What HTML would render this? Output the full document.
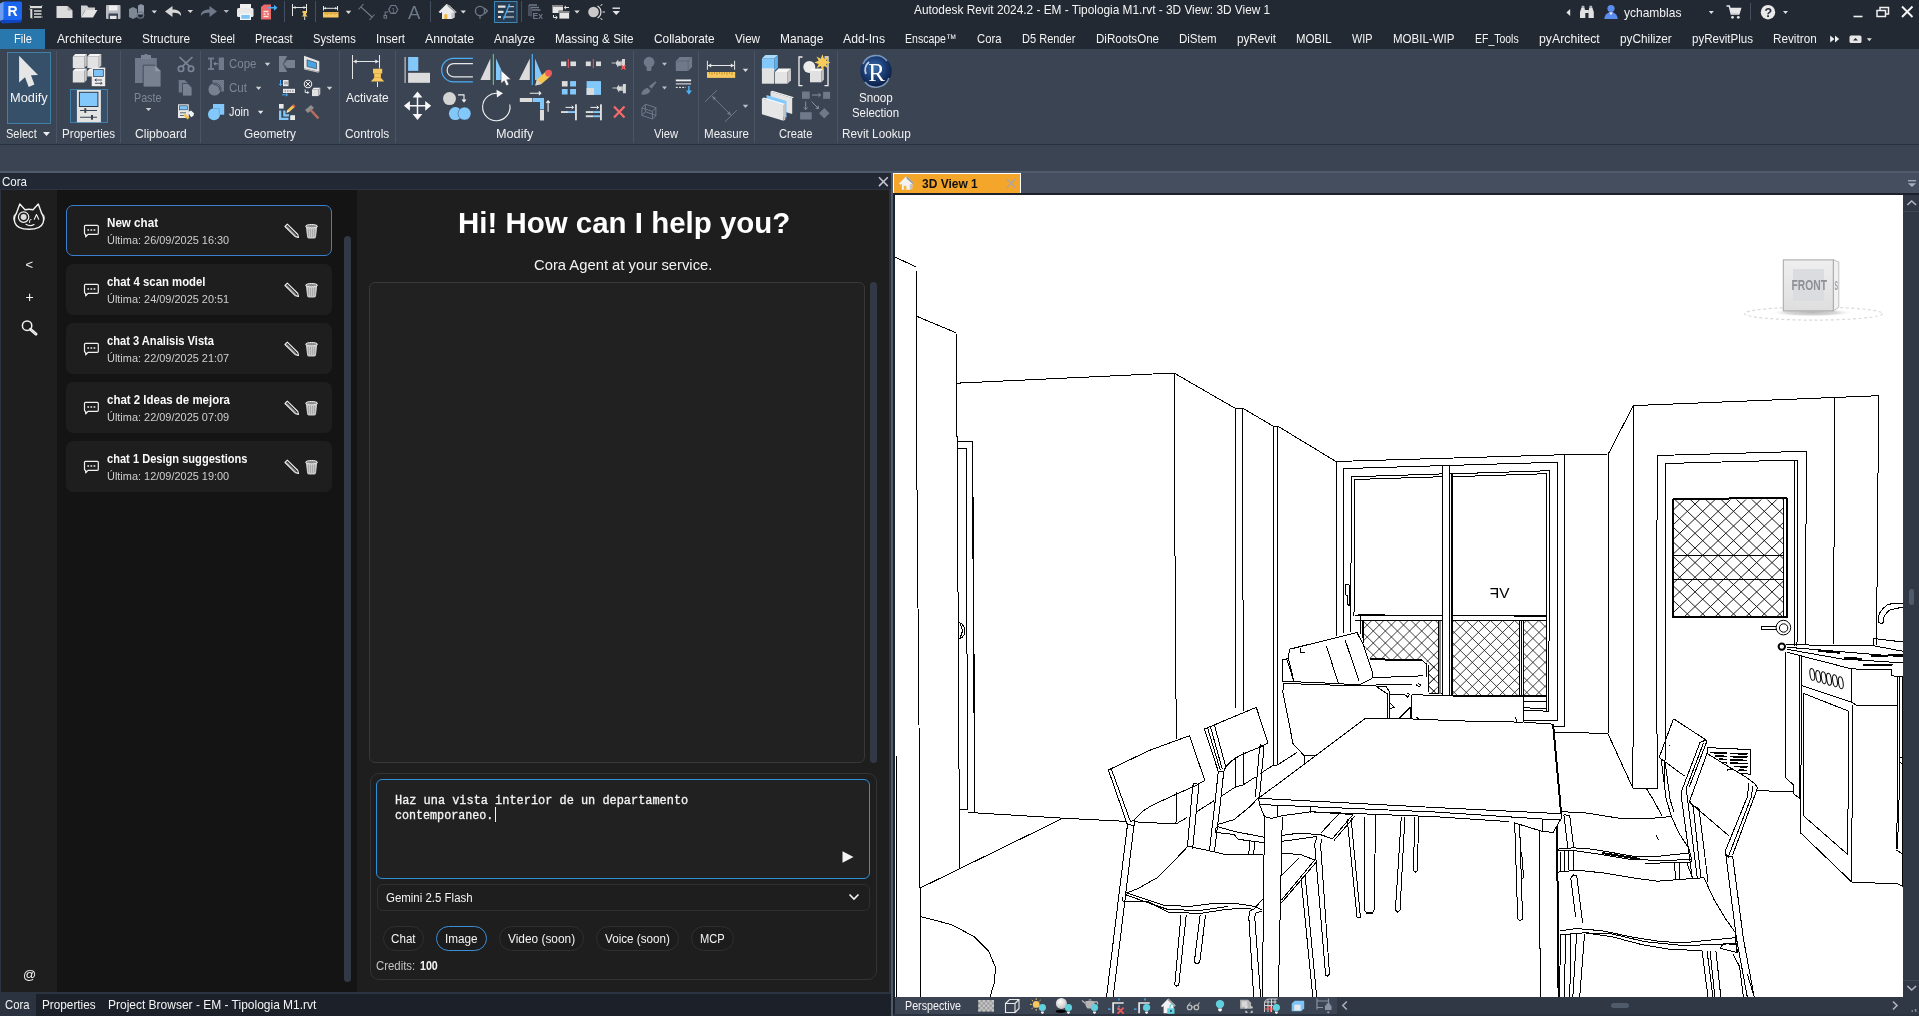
<!DOCTYPE html>
<html lang="en">
<head>
<meta charset="utf-8">
<title>Autodesk Revit 2024.2 - EM - Tipologia M1.rvt - 3D View: 3D View 1</title>
<style>
*{box-sizing:border-box;margin:0;padding:0}
html,body{width:1919px;height:1016px;overflow:hidden;background:#3b4453}
body{position:relative;font-family:"Liberation Sans",sans-serif;font-size:12px;color:#f2f2f2;-webkit-font-smoothing:antialiased}
.a{position:absolute}
.t{position:absolute;white-space:nowrap;line-height:1;transform-origin:0 50%}
svg{position:absolute;overflow:visible}
/* frame */
#titlebar{left:0;top:0;width:1919px;height:49px;background:#222933}
#ribbon{left:0;top:49px;width:1919px;height:95px;background:#3b4453}
#ribline{left:0;top:144px;width:1919px;height:1px;background:#2a313d}
#optbar{left:0;top:145px;width:1919px;height:26px;background:#3b4453}
#optline{left:0;top:171px;width:1919px;height:2px;background:#4f5b6b}
#filetab{left:0;top:29px;width:45px;height:20px;background:#2878ad}
.tab{top:33px;font-size:12.2px;color:#f4f4f4}
.pl{top:128px;font-size:12.2px;color:#f0f0f0}
.sep{position:absolute;top:51px;width:1px;height:92px;background:#4a5464}
</style>
</head>
<body>
<div id="root" style="position:absolute;left:0;top:0;width:1919px;height:1016px;will-change:transform">
<div class="a" id="titlebar"></div>
<div class="a" id="ribbon"></div>
<div class="a" id="ribline"></div>
<div class="a" id="optbar"></div>
<div class="a" id="optline"></div>
<div class="a" id="filetab"></div>
<!-- title -->
<span class="t" id="title" style="left:914.3px;top:4px;font-size:12.6px;color:#f4f4f4;transform:scaleX(0.9400)">Autodesk Revit 2024.2 - EM - Tipologia M1.rvt - 3D View: 3D View 1</span>
<span class="t" id="user" style="left:1624px;top:7px;font-size:12.6px;color:#f4f4f4;transform:scaleX(0.9534)">ychamblas</span>
<!-- tabs -->
<span class="t tab" style="left:14px;transform:scaleX(0.9165)">File</span>
<span class="t tab" style="left:57px;transform:scaleX(0.9995)">Architecture</span>
<span class="t tab" style="left:142px;transform:scaleX(0.9706)">Structure</span>
<span class="t tab" style="left:210px;transform:scaleX(0.8999)">Steel</span>
<span class="t tab" style="left:255px;transform:scaleX(0.9122)">Precast</span>
<span class="t tab" style="left:313px;transform:scaleX(0.9137)">Systems</span>
<span class="t tab" style="left:376px;transform:scaleX(0.9513)">Insert</span>
<span class="t tab" style="left:425px;transform:scaleX(1.0042)">Annotate</span>
<span class="t tab" style="left:494px;transform:scaleX(0.9456)">Analyze</span>
<span class="t tab" style="left:555px;transform:scaleX(0.9656)">Massing &amp; Site</span>
<span class="t tab" style="left:654.3px;transform:scaleX(0.9736)">Collaborate</span>
<span class="t tab" style="left:735px;transform:scaleX(0.9541)">View</span>
<span class="t tab" style="left:780px;transform:scaleX(0.9830)">Manage</span>
<span class="t tab" style="left:843px;transform:scaleX(0.9996)">Add-Ins</span>
<span class="t tab" style="left:905px;transform:scaleX(0.8637)">Enscape™</span>
<span class="t tab" style="left:977.3px;transform:scaleX(0.9235)">Cora</span>
<span class="t tab" style="left:1022.3px;transform:scaleX(0.9058)">D5 Render</span>
<span class="t tab" style="left:1096px;transform:scaleX(0.9489)">DiRootsOne</span>
<span class="t tab" style="left:1179px;transform:scaleX(0.9432)">DiStem</span>
<span class="t tab" style="left:1237px;transform:scaleX(0.9596)">pyRevit</span>
<span class="t tab" style="left:1296px;transform:scaleX(0.9357)">MOBIL</span>
<span class="t tab" style="left:1352px;transform:scaleX(0.8901)">WIP</span>
<span class="t tab" style="left:1393.2px;transform:scaleX(0.9459)">MOBIL-WIP</span>
<span class="t tab" style="left:1475.3px;transform:scaleX(0.8600)">EF_Tools</span>
<span class="t tab" style="left:1539.2px;transform:scaleX(1.0083)">pyArchitect</span>
<span class="t tab" style="left:1620.2px;transform:scaleX(0.9679)">pyChilizer</span>
<span class="t tab" style="left:1692px;transform:scaleX(0.9478)">pyRevitPlus</span>
<span class="t tab" style="left:1773px;transform:scaleX(0.9628)">Revitron</span>
<!-- panel separators -->
<div class="sep" style="left:56px"></div>
<div class="sep" style="left:120px"></div>
<div class="sep" style="left:200px"></div>
<div class="sep" style="left:339px"></div>
<div class="sep" style="left:395px"></div>
<div class="sep" style="left:633px"></div>
<div class="sep" style="left:698px"></div>
<div class="sep" style="left:754px"></div>
<div class="sep" style="left:837px"></div>
<!-- panel labels -->
<span class="t pl" style="left:6px;transform:scaleX(0.9063)">Select</span>
<span class="t pl" style="left:62px;transform:scaleX(0.9541)">Properties</span>
<span class="t pl" style="left:135px;transform:scaleX(0.9910)">Clipboard</span>
<span class="t pl" style="left:244px;transform:scaleX(0.9717)">Geometry</span>
<span class="t pl" style="left:345px;transform:scaleX(0.9760)">Controls</span>
<span class="t pl" style="left:496px;transform:scaleX(1.0388)">Modify</span>
<span class="t pl" style="left:654.3px;transform:scaleX(0.9159)">View</span>
<span class="t pl" style="left:704px;transform:scaleX(0.9489)">Measure</span>
<span class="t pl" style="left:779.3px;transform:scaleX(0.9127)">Create</span>
<span class="t pl" style="left:842px;transform:scaleX(0.9657)">Revit Lookup</span>
<!-- buttons -->
<div class="a" style="left:7px;top:52px;width:44px;height:72px;background:#37506a;border:1px solid #3f7fa8"></div>
<span class="t" style="left:10px;top:92px;font-size:12.2px;color:#f4f4f4;transform:scaleX(1.0500)">Modify</span>
<div class="a" style="left:70px;top:89px;width:38px;height:34px;background:#37506a;border:1px solid #3f7fa8"></div>
<span class="t" style="left:134.3px;top:92px;font-size:12.2px;color:#7d8796;transform:scaleX(0.8790)">Paste</span>
<span class="t" style="left:229.3px;top:58px;font-size:12.2px;color:#7d8796;transform:scaleX(0.9403)">Cope</span>
<span class="t" style="left:229.3px;top:82px;font-size:12.2px;color:#7d8796;transform:scaleX(0.9489)">Cut</span>
<span class="t" style="left:229.3px;top:106px;font-size:12.2px;color:#f4f4f4;transform:scaleX(0.8945)">Join</span>
<span class="t" style="left:346px;top:92px;font-size:12.2px;color:#f4f4f4;transform:scaleX(0.9848)">Activate</span>
<span class="t" style="left:859px;top:92px;font-size:12.2px;color:#f4f4f4;transform:scaleX(0.9560)">Snoop</span>
<span class="t" style="left:852.3px;top:107px;font-size:12.2px;color:#f4f4f4;transform:scaleX(0.9374)">Selection</span>
<svg style="left:0;top:0" width="1919" height="172" viewBox="0 0 1919 172">
<path d="M0 3.5 L4 1.5 L4 19.5 L0 21 Z" fill="#6b9cf0"/><path d="M0 21 L4 19.5 L22 19.5 L21 22.5 L2 23.5 Z" fill="#0e46c4"/><rect x="3.5" y="1.5" width="18.5" height="18.5" rx="1.5" fill="#1a66f0"/>
<text x="7.6" y="16.2" font-family="Liberation Sans,sans-serif" font-weight="bold" font-size="14" fill="#fff">R</text>
<path d="M29.5 5.5 h13 v13 h-13 z" fill="none" stroke="#8a93a3" stroke-width="1" stroke-dasharray="1 11"/><rect x="30" y="6" width="12" height="2.2" fill="#dcdcdc"/><rect x="30.3" y="9" width="2" height="9" fill="#dcdcdc"/><path d="M34 11 h7.5 M34 14 h7.5 M34 17 h7.5" stroke="#dcdcdc" stroke-width="1.6"/>
<path d="M56.5 6 h11 l5 4.5 v7.5 h-16 z" fill="#dcdcdc"/><path d="M67.5 6 l5 4.5 h-5 z" fill="#a9a9a9"/>
<path d="M81 17.5 v-12 h6 l1.5 2 h6.5 v3 h-10 z" fill="#cfcfcf"/><path d="M81 17.5 l4.5 -7.5 h12 l-4.5 7.5 z" fill="#e4e4e4"/>
<rect x="106" y="5" width="14.5" height="14" rx="1" fill="#b9bcc2"/><rect x="109" y="5.5" width="8.5" height="5" fill="#f0f0f0"/><rect x="108.5" y="13.5" width="9.5" height="5.5" fill="#3a4352"/><rect x="110" y="15.8" width="6.5" height="3.2" fill="#e6e6e6"/>
<path d="M129 9 l4 -2 l4 2 v8 l-4 2 l-4 -2 z" fill="#7d8796"/><path d="M138 5.5 l3 -1.5 l3 1.5 v9 h-6 z" fill="#8a94a3"/><circle cx="140.5" cy="15" r="3.2" fill="none" stroke="#6c7686" stroke-width="1.3"/>
<path d="M151.55 10.4 h5.5 l-2.75 3.2 z" fill="#d8d8d8"/>
<path d="M165 11.5 l7.5 -5.5 v3.5 c6 0 9 2.5 8.5 6.5 c-1.5 -2.5 -4 -3.5 -8.5 -3.3 v4.3 z" fill="#d6d6d6"/>
<path d="M187.55 9.9 h5.5 l-2.75 3.2 z" fill="#d8d8d8"/>
<path d="M217 11.5 l-7.5 -5.5 v3.5 c-6 0 -9 2.5 -8.5 6.5 c1.5 -2.5 4 -3.5 8.5 -3.3 v4.3 z" fill="#6f7989"/>
<path d="M223.55 9.9 h5.5 l-2.75 3.2 z" fill="#aeb4bf"/>
<rect x="240" y="4" width="11" height="5" fill="#f0f0f0"/><rect x="237" y="8" width="16.5" height="9" rx="1.5" fill="#e9e9e9"/><rect x="240" y="13.5" width="11" height="6.5" fill="#f5f5f5"/><rect x="241.3" y="15" width="8.4" height="3.8" fill="#7cc4f8"/>
<path d="M261 7 l3 -2.5 h7 v15 h-10 z" fill="#ec6a6a"/><path d="M263.5 11.5 h5 M263.5 14 h2 M267 14 h2 M263.5 16.5 h5" stroke="#fbe3e3" stroke-width="1.4"/><path d="M268 7 h6 v-2.3 l3.5 3 l-3.5 3 v-2.2 h-6 z" fill="#49aef5"/>
<path d="M284.5 1 v21 M315.5 1 v21 M430.5 1 v21 M521.5 1 v21" stroke="#465063" stroke-width="1"/>
<path d="M292.5 4 v12 M306.5 4 v9" stroke="#e6e6e6" stroke-width="1"/><path d="M293 7.5 h13" stroke="#e6e6e6" stroke-width="1"/><path d="M293 7.5 l2.5 -1.5 v3 z M306 7.5 l-2.500 -1.500 v3 z" fill="#e6e6e6"/><path d="M302.5 11 h4.500 v2 h-0.800 v2 l1.500 1.500 h-6 l1.500 -1.500 v-2 h-0.700 z" fill="#f7c860"/><path d="M304.7 16.500 v3.500" stroke="#e6e6e6" stroke-width="1"/>
<path d="M323.5 6 v4.500 M337.500 6 v4.500 M323.500 8.300 h14" stroke="#e6e6e6" stroke-width="1"/><path d="M324 8.300 l2 -1.300 v2.600 z M337 8.300 l-2 -1.300 v2.600 z" fill="#e6e6e6"/><rect x="323" y="12" width="15.500" height="5.500" fill="#f7c860"/><path d="M325 12 v2 M327 12 v2.800 M329 12 v2 M331 12 v2.800 M333 12 v2 M335 12 v2.800 M337 12 v2" stroke="#b98a1e" stroke-width="0.800"/>
<path d="M345.75 10.7 h5.5 l-2.75 3.2 z" fill="#d8d8d8"/>
<path d="M360.500 6.500 l12 11 M358.500 9.500 l5 -5.500 M369.500 20 l5 -5.500" stroke="#6f7989" stroke-width="1.100" fill="none"/>
<path d="M391 5.500 l4.500 0 l2.300 4 l-2.300 4 l-4.500 0 l-2.300 -4 z" fill="none" stroke="#6f7989" stroke-width="1.200"/><path d="M388.500 12 l-3.300 0 v3.500" fill="none" stroke="#6f7989" stroke-width="1.100"/><rect x="384" y="15.500" width="2.600" height="2.600" fill="none" stroke="#6f7989" stroke-width="1"/><text x="391.300" y="12.600" font-family="Liberation Sans,sans-serif" font-size="7" fill="#6f7989">1</text>
<text x="408" y="18.700" font-family="Liberation Sans,sans-serif" font-size="18.500" fill="#6f7989">A</text>
<path d="M438.500 12 l8 -8 l3 1.500 l7 6.500 l-1 1 l-1 -0.800 v5.300 l-3 1.500 h-9.500 v-7 l-1.500 1.300 z" fill="#ececec"/><path d="M446.500 4 l3 1.500 l7 6.500 l-1 1 l-7.500 -6.500 z" fill="#9a9a9a"/><path d="M451.500 13 l3 -1 v5.500 l-3 1.500 z" fill="#c4c4c4"/><rect x="444.300" y="14.200" width="3" height="4.800" fill="#f0b73a"/>
<path d="M460.55 10.4 h5.5 l-2.75 3.2 z" fill="#d8d8d8"/>
<circle cx="480" cy="11" r="4.600" fill="none" stroke="#6f7989" stroke-width="1.300"/><path d="M484.500 8 l3 3 l-3 3" fill="none" stroke="#6f7989" stroke-width="1.200"/><path d="M480 15.500 v3.500" stroke="#6f7989" stroke-width="1.200"/>
<rect x="494.500" y="1.500" width="22.500" height="21" fill="#263c52" stroke="#3f86b5" stroke-width="1"/><path d="M498 6.700 h7.500 M498 11.800 h5.500 M498 17 h3" stroke="#e0e0e0" stroke-width="2.200"/><path d="M508 6.700 h6 M506 11.800 h8 M503.500 17 h10.500" stroke="#e0e0e0" stroke-width="1"/><path d="M509.500 4 l-6 15.500" stroke="#49aef5" stroke-width="1.300"/>
<path d="M529 5 h8 M530.500 7.500 h8.500 M532 10 h8.500" stroke="#6f7989" stroke-width="1.300"/><path d="M529 5 v11 M531 7.500 v9" stroke="#6f7989" stroke-width="1"/><text x="532.500" y="18.800" font-family="Liberation Sans,sans-serif" font-weight="bold" font-size="8.500" fill="#6f7989">Ex</text>
<rect x="552.500" y="5" width="10.500" height="8" fill="#e6e6e6"/><rect x="552.500" y="5" width="10.500" height="2" fill="#8a8a8a"/><rect x="559" y="11" width="10.500" height="8" fill="#e6e6e6" stroke="#222933" stroke-width="0.800"/><rect x="559" y="11" width="10.500" height="2" fill="#8a8a8a"/><path d="M565 7.500 h4 v-0 M553.500 15 v2.500 h3.500" fill="none" stroke="#e6e6e6" stroke-width="1"/><path d="M566 5.800 l-1.800 1.700 l1.800 1.700 M555.500 15.800 l1.800 1.700 l-1.800 1.700" fill="none" stroke="#e6e6e6" stroke-width="1"/>
<path d="M574.25 10.4 h5.5 l-2.75 3.2 z" fill="#d8d8d8"/>
<circle cx="593.500" cy="12" r="5.300" fill="#c9c9c9"/><path d="M597.500 6 a7 7 0 0 1 0 12" fill="none" stroke="#e6e6e6" stroke-width="1.200"/><path d="M600.500 6 l1.800 -2 M602.500 12 h2.500 M600.500 18 l1.800 2" stroke="#e6e6e6" stroke-width="1"/>
<path d="M612.500 8.200 h7.500" stroke="#e6e6e6" stroke-width="1.400"/><path d="M612.500 11 h7.500 l-3.750 4 z" fill="#e6e6e6"/>
<path d="M1570.200 9 v7 l-3.800 -3.500 z" fill="#e6e6e6"/>
<path d="M1580 18 v-6 l1.500 -4.500 h3 l0.800 4.500 v6 z M1588.500 18 v-6 l0.800 -4.500 h3 l1.500 4.500 v6 z" fill="#e2e2e2"/><rect x="1585" y="10" width="3.800" height="3" fill="#e2e2e2"/><rect x="1581.700" y="5.800" width="2.600" height="2" fill="#bdbdbd"/><rect x="1589.500" y="5.800" width="2.600" height="2" fill="#bdbdbd"/>
<circle cx="1611" cy="8.500" r="3.600" fill="#5b8def"/><path d="M1604.300 19 c0.500 -5 3 -6.500 6.700 -6.500 s6.200 1.500 6.700 6.500 z" fill="#5b8def"/><path d="M1609 12.300 l2 3 l2 -3 z" fill="#dfe8fb"/>
<path d="M1708.8 11.1 h5 l-2.5 3 z" fill="#e0e0e0"/>
<path d="M1726.500 6 h2.800 l2 8 h7.500 l1.700 -5.500 h-10.500" fill="none" stroke="#e6e6e6" stroke-width="1.500"/><path d="M1730.300 8.500 h10 l-1.500 5 h-7.300 z" fill="#e6e6e6"/><circle cx="1732.500" cy="17.300" r="1.400" fill="#e6e6e6"/><circle cx="1738.300" cy="17.300" r="1.400" fill="#e6e6e6"/>
<path d="M1750.500 3 v17" stroke="#465063" stroke-width="1"/>
<circle cx="1768" cy="12.200" r="7.200" fill="#e9e9e9"/><text x="1764.600" y="16.600" font-family="Liberation Sans,sans-serif" font-weight="bold" font-size="12.500" fill="#222933">?</text>
<path d="M1783 11.1 h5 l-2.5 3 z" fill="#e0e0e0"/>
<path d="M1853.500 16.500 h9" stroke="#f0f0f0" stroke-width="1.600"/>
<rect x="1877" y="10.500" width="8.500" height="6" fill="none" stroke="#f0f0f0" stroke-width="1.500"/><path d="M1880 10 v-2.500 h8.500 v6.500 h-2.500" fill="none" stroke="#f0f0f0" stroke-width="1.500"/>
<path d="M1902 6.500 l10.500 10.500 M1912.500 6.500 l-10.500 10.500" stroke="#f4f4f4" stroke-width="1.900"/>
<path d="M1830.200 35.500 l4.200 3.500 l-4.200 3.500 z M1835 35.500 l4.200 3.500 l-4.200 3.500 z" fill="#f0f0f0"/>
<rect x="1849.500" y="35.500" width="12" height="7.500" rx="1.500" fill="#e6e6e6"/><path d="M1853 40.500 l2.500 -2.500 l2.500 2.500 z" fill="#222933"/>
<path d="M1866.8 38.3 h5 l-2.5 3 z" fill="#e0e0e0"/>
<path d="M19.100 55.800 L19.100 82.400 L25 77.200 L28.700 87 L34.400 84.500 L31 75.300 L38 74.900 Z" fill="#e6e6e6"/>
<path d="M43 132 h7 l-3.5 4 z" fill="#f0f0f0"/>
<path d="M72.8 56.5 h11.5 v11.5 h-11.5 z" fill="#e2e2e2"/>
<path d="M72.8 56.5 l2.5 -2.5 h11.5 l-2.5 2.5 z" fill="#f4f4f4"/>
<path d="M84.3 56.5 l2.5 -2.5 v11.5 l-2.5 2.5 z" fill="#c6c6c6"/>
<path d="M87.3 56.5 h11.5 v11.5 h-11.5 z" fill="#e2e2e2"/>
<path d="M87.3 56.5 l2.5 -2.5 h11.5 l-2.5 2.5 z" fill="#f4f4f4"/>
<path d="M98.8 56.5 l2.5 -2.5 v11.5 l-2.5 2.5 z" fill="#c6c6c6"/>
<path d="M72.8 71 h11.5 v11.5 h-11.5 z" fill="#e2e2e2"/>
<path d="M72.8 71 l2.5 -2.5 h11.5 l-2.5 2.5 z" fill="#f4f4f4"/>
<path d="M84.3 71 l2.5 -2.5 v11.5 l-2.5 2.5 z" fill="#c6c6c6"/>
<path d="M87.3 71 h5.5 v5.5 h-5.5 z" fill="#e2e2e2"/>
<path d="M87.3 71 l2.5 -2.5 h5.5 l-2.5 2.5 z" fill="#f4f4f4"/>
<path d="M92.8 71 l2.5 -2.5 v5.5 l-2.5 2.5 z" fill="#c6c6c6"/>
<rect x="91.700" y="67.600" width="13.500" height="18.600" fill="#ededed"/><rect x="93.500" y="69.400" width="9.800" height="7" fill="#7cc4f8" stroke="#2b3a4a" stroke-width="0.700"/><path d="M95 80 h7 M95 83.300 h7" stroke="#3a4352" stroke-width="0.900"/><path d="M96.500 78.800 l-1.700 1.200 l1.700 1.200 M100.500 82.100 l1.700 1.200 l-1.700 1.200" fill="none" stroke="#3a4352" stroke-width="0.900"/>
<rect x="76.900" y="90" width="24" height="32.300" fill="#e3e3e3"/><rect x="79.400" y="92.300" width="18.500" height="14.200" fill="#83c8fa" stroke="#2b3a4a" stroke-width="1"/><path d="M80 110.500 h17 M80 117.300 h17" stroke="#3a4352" stroke-width="1.100"/><rect x="84.300" y="108.200" width="2" height="4.700" fill="#3a4352"/><rect x="91" y="115" width="2" height="4.700" fill="#3a4352"/>
<rect x="135" y="58" width="21.800" height="25" fill="#6f7989"/><rect x="141" y="55" width="10" height="4" fill="#7a8494"/><rect x="144.500" y="54" width="3" height="2" fill="#7a8494"/>
<path d="M143.200 65.200 h11.800 l6 6 v15.800 h-17.800 z" fill="#77818f" stroke="#3b4453" stroke-width="0.800"/><path d="M155 65.200 l6 6 h-6 z" fill="#8d96a4"/>
<path d="M145.75 107.9 h5.5 l-2.75 3.2 z" fill="#cfcfcf"/>
<g fill="none" stroke="#7b8595" stroke-width="1.700"><circle cx="181" cy="68.800" r="2.700"/><circle cx="191" cy="68.800" r="2.700"/><path d="M182.500 66.300 L192.500 57 M189.500 66.300 L179.500 57"/></g>
<path d="M178.700 80 h6 l3 3 v9.500 h-9 z" fill="#6f7989"/><path d="M182.500 83.500 h5.500 l4 4 v8.500 h-9.500 z" fill="#77818f" stroke="#3b4453" stroke-width="0.800"/>
<rect x="178" y="104.300" width="10.800" height="13.700" fill="#e8e8e8"/><rect x="179.500" y="105.800" width="7.800" height="4" fill="#7cc4f8" stroke="#2b3a4a" stroke-width="0.600"/><path d="M180 112.800 h6 M180 115.500 h5" stroke="#3a4352" stroke-width="0.800"/><path d="M185 113.500 l4.500 4 l-1.800 2 l-4.200 -3.800 z" fill="#f0c24a"/><path d="M188 112 l3 -1.500 l3 2.700 l-0.500 2.500 l-2.500 1.500 z" fill="#f4f4f4"/>
<path d="M208 57.500 h6 v2 h-2 v8.500 h2 v2 h-6 v-2 h2 v-8.500 h-2 z" fill="#6f7989"/><rect x="218.700" y="57.500" width="5.300" height="12.500" fill="#6f7989"/><path d="M218 63.800 h-4 m1.600 -1.600 l-1.600 1.600 l1.600 1.600" stroke="#9aa3b0" stroke-width="0.900" fill="none"/>
<path d="M264.75 62.8 h5.5 l-2.75 3.2 z" fill="#cfcfcf"/>
<path d="M279 56 h8 l-4 8 l4 8 h-8 z" fill="#77818f"/><path d="M287 60 h8 v8 h-8 l-3.500 -4 z" fill="#77818f"/><path d="M287 56.500 l-3.800 7.500 l3.800 7.500" fill="none" stroke="#596273" stroke-width="1"/>
<path d="M304 55.800 l15.300 5.500 v10.500 l-15.300 -3.300 z" fill="#e6e6e6"/><path d="M304 68.500 l15.300 3.300 l-0.800 1 l-14.500 -3.200 z" fill="#bcbcbc"/><path d="M307 59.800 l9.500 3 v6 l-9.500 -2.200 z" fill="#4aa3e0" stroke="#2b3a4a" stroke-width="0.600"/>
<rect x="212.500" y="80" width="11.500" height="11.500" fill="#6f7989"/><circle cx="214.500" cy="89.500" r="6.500" fill="#77818f" stroke="#3b4453" stroke-width="0.800"/><path d="M213.500 84.500 a6 6 0 0 1 6.500 6" fill="none" stroke="#3b4453" stroke-width="1"/>
<path d="M255.85 86.7 h5.5 l-2.75 3.2 z" fill="#cfcfcf"/>
<rect x="283" y="80" width="5.500" height="6.200" fill="#e8e8e8"/><path d="M285 81.500 v3 M287 81.500 v3" stroke="#3a4352" stroke-width="0.700"/><rect x="283" y="88.800" width="12" height="4.200" fill="#e8e8e8"/><path d="M284.500 91 h9.500" stroke="#3a4352" stroke-width="0.800" stroke-dasharray="1.500 1"/><path d="M280.500 80 v5.500 m-1.500 -1.700 l1.500 1.700 l1.500 -1.700" fill="none" stroke="#49aef5" stroke-width="1"/><path d="M282 94.800 h5.500 m-1.700 -1.500 l1.700 1.500 l-1.700 1.500" fill="none" stroke="#49aef5" stroke-width="1"/>
<circle cx="308" cy="84" r="3.700" fill="none" stroke="#e8e8e8" stroke-width="1.100"/><path d="M305.500 81.500 l5 5 M310.500 81.500 l-5 5" stroke="#e8e8e8" stroke-width="1"/><path d="M305.200 89.500 v3 h3.500 m-1.300 -1.300 l1.300 1.300 l-1.300 1.300" fill="none" stroke="#e8e8e8" stroke-width="1"/>
<path d="M312 89.6 h6.5 v6.5 h-6.5 z" fill="#e2e2e2"/>
<path d="M312 89.6 l1.8 -1.8 h6.5 l-1.8 1.8 z" fill="#f4f4f4"/>
<path d="M318.5 89.6 l1.8 -1.8 v6.5 l-1.8 1.8 z" fill="#c6c6c6"/>
<path d="M326.75 86.7 h5.5 l-2.75 3.2 z" fill="#cfcfcf"/>
<rect x="213" y="104" width="11.200" height="10.700" fill="#83c8fa"/><circle cx="214" cy="114.200" r="6" fill="#83c8fa"/><path d="M213.300 108.500 h6 v6" fill="none" stroke="#5aa9e0" stroke-width="0.800"/>
<path d="M257.85 110.8 h5.5 l-2.75 3.2 z" fill="#e8e8e8"/>
<rect x="279" y="104" width="4.600" height="4.600" fill="#e8e8e8"/><rect x="290.200" y="115.200" width="4.800" height="4.800" fill="#e8e8e8"/><path d="M279 110.500 h2.300 v7.200 h7.200 v2.300 h-9.500 z" fill="#83c8fa"/><path d="M283.200 110.500 h2.300 v3.800 h3.500 v2.200 h-5.800 z" fill="#83c8fa"/><path d="M286.500 112.800 l1 -3 l5.500 -5 l2 2 l-5.500 5 z" fill="#f4c552"/><path d="M292 105.600 l1.500 -1.400 l2 2 l-1.500 1.400 z" fill="#ee5b5b"/><path d="M286.500 112.800 l1 -3 l2 2 z" fill="#e8e8e8"/>
<path d="M305 110 l6 -5 l3 3 l-6 5 z" fill="#8f8f8f"/><path d="M309.500 110.500 l1.800 -1.600 l8 8.600 l-1.800 1.700 z" fill="#b5705a"/>
<path d="M352.500 55 v24 M379.500 55 v13.500" stroke="#e6e6e6" stroke-width="1"/><path d="M353.500 61.500 h25" stroke="#e6e6e6" stroke-width="1"/><path d="M353.200 61.500 l3.500 -2 v4 z M378.800 61.500 l-3.500 -2 v4 z" fill="#e6e6e6"/>
<path d="M373 68.800 h9.200 v4.700 h-1.300 v4.200 l3.300 3.700 h-13.300 l3.300 -3.700 v-4.200 h-1.200 z" fill="#f7c860"/><path d="M374.200 73.500 h6.700 M374.200 77.500 h6.700" stroke="#d9a73a" stroke-width="0.700"/><path d="M377.500 81.800 v5.200" stroke="#e6e6e6" stroke-width="1"/>
<path d="M405.100 57 v26" stroke="#e0e0e0" stroke-width="1"/><rect x="408.100" y="57" width="10.200" height="13.900" fill="#83c8fa"/><rect x="408.100" y="72.800" width="21.900" height="10" fill="#dcdcdc"/>
<path d="M472.900 58.300 h-19.500 a11.750 11.750 0 0 0 0 23.500 h19.500" fill="none" stroke="#49aef5" stroke-width="1.200"/><path d="M472.900 63.600 h-19.200 a6.600 6.600 0 0 0 0 13.200 h19.200" fill="none" stroke="#e8e8e8" stroke-width="1.200"/>
<path d="M480.400 79.900 h10 v-21.300 z" fill="#dcdcdc"/><path d="M493.400 54 v31" stroke="#3fd06a" stroke-width="1.200"/><path d="M496 58.600 v21.300 h10 z" fill="#83c8fa"/>
<path d="M501 70.300 v13.200 l3.200 -2.700 l2.200 5 l2.600 -1.200 l-2.200 -4.800 l4.200 -0.300 z" fill="#f8f8f8" stroke="#3b4453" stroke-width="0.600"/>
<path d="M519.100 79.900 h10.700 v-21.300 z" fill="#dcdcdc"/><path d="M532.300 54 v31" stroke="#49aef5" stroke-width="1.200"/><path d="M535 58.600 v21.300 h9 z" fill="#83c8fa"/>
<path d="M535.300 85.500 l1.600 -6 l9.500 -8.500 l4.600 4.800 l-9.500 8.300 z" fill="#f4c552"/><path d="M535.300 85.500 l1.600 -6 l4.600 4.600 z" fill="#d4d4d4"/><circle cx="548.600" cy="73.200" r="3.400" fill="#ee5b5b"/>
<rect x="561" y="61.500" width="5.300" height="4.600" fill="#dcdcdc"/><rect x="570.400" y="61.500" width="5.600" height="4.600" fill="#dcdcdc"/><path d="M568.300 59 v9" stroke="#ee5b5b" stroke-width="1"/>
<rect x="585.800" y="61.500" width="5" height="4.600" fill="#dcdcdc"/><rect x="596" y="61.500" width="5" height="4.600" fill="#dcdcdc"/><path d="M593.300 59 v9" stroke="#ee5b5b" stroke-width="1"/>
<path d="M611.6 63 h4" stroke="#d6d6d6" stroke-width="0.900"/><path d="M615.4 63 l2.800 -3.600 v2 h3.800 v-2.400 h3 v9.200 h-3 v-2.400 h-3.800 v2 z" fill="#d6d6d6"/><path d="M621.2 60.4 v5.200" stroke="#9a9a9a" stroke-width="0.800"/>
<path d="M621.300 65.300 l4.200 4.200 M625.500 65.300 l-4.200 4.200" stroke="#ee4d4d" stroke-width="1.500"/>
<rect x="561.900" y="81.100" width="5.700" height="5.400" fill="#dcdcdc"/><rect x="570.100" y="81.100" width="5.900" height="5.400" fill="#83c8fa"/><rect x="561.900" y="89" width="5.700" height="5.500" fill="#83c8fa"/><rect x="570.100" y="89" width="5.900" height="5.500" fill="#83c8fa"/>
<rect x="586.600" y="81.100" width="14.400" height="13.800" fill="#83c8fa"/><rect x="586.600" y="88" width="7.500" height="6.900" fill="#dcdcdc"/>
<path d="M612.5 88 h4" stroke="#d6d6d6" stroke-width="0.900"/><path d="M616.3 88 l2.800 -3.600 v2 h3.800 v-2.400 h3 v9.200 h-3 v-2.400 h-3.800 v2 z" fill="#d6d6d6"/><path d="M622.1 85.4 v5.200" stroke="#9a9a9a" stroke-width="0.800"/>
<rect x="575" y="104.300" width="1.900" height="16" fill="#dcdcdc"/><rect x="561" y="111.100" width="7" height="1.900" fill="#dcdcdc"/><rect x="568" y="111.100" width="7" height="1.900" fill="#83c8fa"/><path d="M565.500 107.400 h8 m-1.800 -1.600 l1.800 1.600 l-1.800 1.600" fill="none" stroke="#f0f0f0" stroke-width="1"/>
<rect x="600" y="104.300" width="1.900" height="16" fill="#dcdcdc"/><rect x="585.800" y="111.100" width="7.500" height="1.900" fill="#dcdcdc"/><rect x="593.300" y="111.100" width="6.700" height="1.900" fill="#83c8fa"/><rect x="585.800" y="115.300" width="7.500" height="1.900" fill="#dcdcdc"/><rect x="593.300" y="115.300" width="6.700" height="1.900" fill="#83c8fa"/><path d="M590.500 107.400 h8 m-1.800 -1.600 l1.800 1.600 l-1.800 1.600" fill="none" stroke="#f0f0f0" stroke-width="1"/>
<path d="M614 106.500 l10.500 11 M624.500 106.500 l-10.500 11" stroke="#f46a6a" stroke-width="2.300"/>
<path d="M417.500 94 v23.500 M405.500 105.800 h24" stroke="#f8f8f8" stroke-width="1.500"/><path d="M417.500 91.600 l4.900 6 h-9.800 z M417.500 119.900 l4.900 -6 h-9.800 z M403.900 105.800 l6 -4.900 v9.800 z M431.200 105.800 l-6 -4.900 v9.800 z" fill="#f8f8f8"/>
<circle cx="449.500" cy="98.600" r="6.500" fill="#d4d4d4"/><circle cx="455.400" cy="113.600" r="6.500" fill="#83c8fa"/><circle cx="464.500" cy="113.600" r="6.500" fill="#83c8fa" stroke="#3b4453" stroke-width="0.500"/><path d="M458 94.900 h6 v6" fill="none" stroke="#f0f0f0" stroke-width="1.100"/><path d="M461.500 99.500 h5 l-2.500 3.300 z" fill="#f0f0f0"/>
<path d="M498.500 93.500 a13.700 13.700 0 1 0 11.300 11" fill="none" stroke="#f4f4f4" stroke-width="1.100"/><path d="M496.500 89.800 l6.500 3.500 l-6 4.200 z" fill="#f4f4f4"/>
<rect x="519.800" y="98" width="12.500" height="4" fill="#dcdcdc"/><path d="M532.900 98 h11.100 v11.300 h-4 v-7.300 h-7.100 z" fill="#83c8fa"/><rect x="540" y="109.900" width="4" height="10.600" fill="#dcdcdc"/><path d="M529.800 93.300 h11 m-2 -1.800 l2 1.800 l-2 1.800" fill="none" stroke="#f0f0f0" stroke-width="1.100"/><path d="M548.100 111.800 v-11 m-1.800 2 l1.800 -2 l1.800 2" fill="none" stroke="#f0f0f0" stroke-width="1.100"/>
<circle cx="649.100" cy="62.200" r="5.400" fill="#6f7989"/><rect x="646.600" y="66.500" width="4.800" height="4.500" rx="1" fill="#6f7989"/>
<path d="M662 62.8 h5 l-2.5 3 z" fill="#b9bfc9"/>
<path d="M675.800 61 l4 -4 h12.300 v10 l-4 4 h-12.300 z" fill="#6f7989"/><path d="M675.800 61 h12.300 v10 M688.100 61 l4 -4" fill="none" stroke="#596273" stroke-width="0.800"/>
<path d="M641.500 94.700 c0 -4 3 -6 6 -7 l3 3 c-1.500 3 -4.500 4.500 -9 4 z" fill="#6f7989"/><path d="M649 86.300 l6.500 -5 l1 1 l-5 6.500 z" fill="#6f7989"/>
<path d="M662 86.6 h5 l-2.5 3 z" fill="#b9bfc9"/>
<path d="M675.800 80.400 h15.300" stroke="#f0f0f0" stroke-width="1.800"/><path d="M675.800 83.900 h15.300" stroke="#f0f0f0" stroke-width="1"/><path d="M675.800 87.400 h10" stroke="#f0f0f0" stroke-width="1" stroke-dasharray="2 1.200"/><path d="M688.900 86 v5" stroke="#4db2f5" stroke-width="1.500"/><path d="M685.900 90.500 h6 l-3 4.200 z" fill="#4db2f5"/>
<path d="M641.900 108 l3.500 -3.800 l10.500 3.500 v8 l-3.500 3.200 l-10.500 -3.400 z M645.400 104.200 v7.500 l10.500 3.800 M645.400 111.700 l-3.500 3.800 M641.900 108 l10.500 3.400 v7.500 M652.400 111.400 l3.500 -3.700" fill="none" stroke="#6f7989" stroke-width="1"/>
<path d="M707.400 60.800 v9 M734.600 60.800 v9 M708 65.500 h26" stroke="#e8e8e8" stroke-width="1"/><path d="M707.900 65.500 l3.300 -1.900 v3.800 z M734.100 65.500 l-3.300 -1.900 v3.800 z" fill="#e8e8e8"/><rect x="707" y="72" width="28.200" height="5.900" fill="#f7c860"/><path d="M709.500 72 v2 M712 72 v3 M714.500 72 v2 M717 72 v3 M719.500 72 v2 M722 72 v3 M724.500 72 v2 M727 72 v3 M729.500 72 v2 M732 72 v3" stroke="#b98a1e" stroke-width="0.800"/>
<path d="M742.75 68.7 h5.5 l-2.75 3.2 z" fill="#d8d8d8"/>
<path d="M705 101.700 l11.900 -11.400 M725.100 121.700 l11.700 -11.400 M712 96.100 l19.200 19.300" fill="none" stroke="#6f7989" stroke-width="1"/><path d="M712 96.100 l4.200 1.600 l-2.600 2.600 z M731.200 115.400 l-4.200 -1.600 l2.600 -2.600 z" fill="#6f7989"/>
<path d="M742.75 104.8 h5.5 l-2.75 3.2 z" fill="#b9bfc9"/>
<path d="M761.9 58.5 h12.5 v12.8 h-12.5 z" fill="#83c8fa"/>
<path d="M761.9 58.5 l3.5 -3.5 h12.5 l-3.5 3.5 z" fill="#a8dafc"/>
<path d="M774.4 58.5 l3.5 -3.5 v12.8 l-3.5 3.5 z" fill="#5fb0ec"/>
<path d="M761.9 68.3 h12.4 v15.4 h-12.4 z" fill="#e2e2e2"/>
<path d="M761.9 68.3 l0 0 h12.4 l0 0 z" fill="#f0f0f0"/>
<path d="M774.3 68.3 l0 0 v15.4 l0 0 z" fill="#c6c6c6"/>
<path d="M775 71.9 h12.5 v11.8 h-12.5 z" fill="#e4e4e4"/>
<path d="M775 71.9 l3.5 -3.5 h12.5 l-3.5 3.5 z" fill="#f6f6f6"/>
<path d="M787.5 71.9 l3.5 -3.5 v11.8 l-3.5 3.5 z" fill="#c8c8c8"/>
<path d="M802.500 57 h-3.500 v28.600 h3.500 M824.500 57 h3.500 v28.600 h-3.500" fill="none" stroke="#f0f0f0" stroke-width="1.300"/><circle cx="809.300" cy="67" r="6" fill="#ececec"/>
<path d="M810 70.9 h11.4 v11.4 h-11.4 z" fill="#e0e0e0"/>
<path d="M810 70.9 l2.5 -2.5 h11.4 l-2.5 2.5 z" fill="#f6f6f6"/>
<path d="M821.4 70.9 l2.5 -2.5 v11.4 l-2.5 2.5 z" fill="#c4c4c4"/>
<path d="M822.400 54.200 l1.600 4.500 l4.300 -2.200 l-2.200 4.300 l4.500 1.600 l-4.500 1.600 l2.200 4.300 l-4.300 -2.200 l-1.600 4.500 l-1.600 -4.500 l-4.300 2.200 l2.200 -4.300 l-4.500 -1.600 l4.500 -1.600 l-2.200 -4.300 l4.300 2.200 z" fill="#f8cc5a"/>
<path d="M770.500 91.500 l21.700 6.500 v16 l-21.700 -6.500 z" fill="#e4e4e4"/><path d="M770.500 91.500 l1.800 -0.800 l21.700 6.500 l-1.800 0.800 z" fill="#f6f6f6"/>
<path d="M766.500 95 l20 6 v16.500 l-20 -6 z" fill="#83c8fa"/>
<path d="M761.900 98.500 l21.500 6.500 v15.700 l-21.500 -6.500 z" fill="#e6e6e6"/><path d="M761.900 98.500 l2 -1 l21.500 6.500 l-2 1 z" fill="#f8f8f8"/><path d="M783.400 105 l2 -1 v15.700 l-2 1 z" fill="#c4c4c4"/>
<rect x="802" y="91.500" width="7.700" height="7.300" fill="#6f7989"/><rect x="823.100" y="91.800" width="7" height="7" fill="#6f7989"/><rect x="800.100" y="112.200" width="11.600" height="7.300" fill="#6f7989"/><path d="M824.300 108 l5.200 5.200 l-5.200 5.200 l-5.200 -5.200 z" fill="#6f7989"/>
<path d="M812 95 h8.500 m-2 -1.800 l2 1.800 l-2 1.800 M805.700 101.500 v8 m-1.800 -2 l1.800 2 l1.800 -2 M811.500 101.500 l7 7 m-0.300 -2.800 l0.300 2.800 l-2.800 -0.300" fill="none" stroke="#8791a0" stroke-width="1"/>
<defs><radialGradient id="rl" cx="0.45" cy="0.4" r="0.6"><stop offset="0" stop-color="#3d6fae"/><stop offset="0.55" stop-color="#1c3f78"/><stop offset="1" stop-color="#0d1f44"/></radialGradient></defs>
<circle cx="876" cy="71" r="15.700" fill="url(#rl)"/><path d="M863 64 a14 14 0 0 1 24 -3 M889 78 a14 14 0 0 1 -24 4" fill="none" stroke="#9cc0e6" stroke-width="1.600" opacity="0.700"/><path d="M866 74 a10.500 10.500 0 0 1 3 -12" fill="none" stroke="#e8f0fa" stroke-width="2" opacity="0.800"/>
<text x="868.300" y="80.500" font-family="Liberation Serif,serif" font-size="25" fill="#fff">R</text>
</svg>

<!-- Cora dock panel -->
<div class="a" style="left:0;top:173px;width:891px;height:17px;background:#222935"></div>
<div class="a" style="left:0;top:189px;width:891px;height:1px;background:#2b3340"></div>
<span class="t" style="left:1.6px;top:176px;font-size:12.2px;color:#f4f4f4;transform:scaleX(0.9462)">Cora</span>
<div class="a" style="left:0;top:190px;width:891px;height:804px;background:#2b3340"></div>
<div class="a" style="left:1px;top:190px;width:56px;height:802px;background:#1e1e1e"></div>
<div class="a" style="left:57px;top:190px;width:300px;height:802px;background:#141414"></div>
<div class="a" style="left:357px;top:190px;width:532px;height:802px;background:#1e1e1e"></div>
<div class="a" style="left:891px;top:173px;width:2px;height:843px;background:#4f5b6b"></div>
<!-- sidebar -->
<span class="t" style="left:25.5px;top:258px;font-size:13px;color:#f4f4f4">&lt;</span>
<span class="t" style="left:25.5px;top:290px;font-size:14px;color:#f4f4f4">+</span>
<span class="t" style="left:23px;top:968px;font-size:13px;color:#f4f4f4">@</span>
<!-- chat list -->
<style>
.ci{position:absolute;left:66px;width:266px;height:51px;background:#1e1e1e;border-radius:7px}
.ci b{position:absolute;left:41.2px;top:12px;font-size:12px;line-height:1;white-space:nowrap;color:#fafafa;transform-origin:0 50%}
.ci i{position:absolute;left:41.2px;top:30px;font-size:11px;line-height:1;white-space:nowrap;color:#cfcfcf;font-style:normal;transform-origin:0 50%}
.pill{position:absolute;top:926px;height:25px;border:1px solid #2f2f2f;border-radius:13px;background:#1c1c1c}
.pt{top:933px;font-size:12.5px;color:#f4f4f4}
</style>
<div class="ci" style="top:205px;border:1px solid #3b7fd0"><b style="left:40.2px;top:11px;transform:scaleX(0.9680)">New chat</b><i style="left:40.2px;top:29px;transform:scaleX(0.9941)">Última: 26/09/2025 16:30</i></div>
<div class="ci" style="top:264px"><b style="transform:scaleX(0.9467)">chat 4 scan model</b><i style="transform:scaleX(0.9941)">Última: 24/09/2025 20:51</i></div>
<div class="ci" style="top:323px"><b style="transform:scaleX(0.9273)">chat 3 Analisis Vista</b><i style="transform:scaleX(0.9941)">Última: 22/09/2025 21:07</i></div>
<div class="ci" style="top:382px"><b style="transform:scaleX(0.9555)">chat 2 Ideas de mejora</b><i style="transform:scaleX(0.9941)">Última: 22/09/2025 07:09</i></div>
<div class="ci" style="top:441px"><b style="transform:scaleX(0.9241)">chat 1 Design suggestions</b><i style="transform:scaleX(0.9941)">Última: 12/09/2025 19:00</i></div>
<div class="a" style="left:344px;top:236px;width:7px;height:746px;background:#323946;border-radius:3.5px"></div>
<!-- main -->
<span class="t" style="left:457.9px;top:209px;font-size:29px;font-weight:bold;color:#fff;transform:scaleX(1.0160)">Hi! How can I help you?</span>
<span class="t" style="left:533.9px;top:257px;font-size:15px;color:#f4f4f4;transform:scaleX(0.9860)">Cora Agent at your service.</span>
<div class="a" style="left:369px;top:282px;width:496px;height:481px;background:#212121;border:1px solid #383838;border-radius:6px"></div>
<div class="a" style="left:870px;top:282px;width:7px;height:481px;background:#323946;border-radius:3.5px"></div>
<div class="a" style="left:369.5px;top:772.5px;width:507.5px;height:207px;background:#1e1e1e;border:1px solid #333;border-radius:9px"></div>
<div class="a" style="left:376px;top:779px;width:494px;height:100px;background:#212121;border:1px solid #2f8fd6;border-radius:6px"></div>
<span class="t" style="left:395px;top:795px;font-family:'Liberation Mono',monospace;font-size:12px;color:#f4f4f4;-webkit-text-stroke:0.3px #f4f4f4;transform:scaleX(0.9931)">Haz una vista interior de un departamento</span>
<span class="t" style="left:395px;top:810px;font-family:'Liberation Mono',monospace;font-size:12px;color:#f4f4f4;-webkit-text-stroke:0.3px #f4f4f4;transform:scaleX(0.9749)">contemporaneo.</span>
<div class="a" style="left:495px;top:807px;width:1px;height:15px;background:#f4f4f4"></div>
<svg style="left:842px;top:851px" width="12" height="12" viewBox="0 0 12 12"><path d="M0.5 0.3 L11.5 6 L0.5 11.7 Z" fill="#f4f4f4"/></svg>
<div class="a" style="left:377px;top:884px;width:493px;height:27px;background:#1e1e1e;border:1px solid #303030;border-radius:6px"></div>
<span class="t" style="left:385.8px;top:892px;font-size:12.5px;color:#f4f4f4;transform:scaleX(0.9166)">Gemini 2.5 Flash</span>
<svg style="left:848px;top:892px" width="12" height="10" viewBox="0 0 12 10"><path d="M1.5 2.5 L6 7 L10.5 2.5" fill="none" stroke="#f4f4f4" stroke-width="1.6"/></svg>
<div class="pill" style="left:382.5px;width:41.5px"></div>
<div class="pill" style="left:436px;width:51px;border:1.5px solid #3a8fd8"></div>
<div class="pill" style="left:499px;width:85px"></div>
<div class="pill" style="left:596px;width:83px"></div>
<div class="pill" style="left:691px;width:42.5px"></div>
<span class="t pt" style="left:391px;transform:scaleX(0.9316)">Chat</span>
<span class="t pt" style="left:445.2px;transform:scaleX(0.9381)">Image</span>
<span class="t pt" style="left:508.2px;transform:scaleX(0.9497)">Video (soon)</span>
<span class="t pt" style="left:605px;transform:scaleX(0.9340)">Voice (soon)</span>
<span class="t pt" style="left:700.2px;transform:scaleX(0.8891)">MCP</span>
<span class="t" style="left:376.4px;top:960px;font-size:12px;color:#c4c4c4;transform:scaleX(0.9481)">Credits:</span>
<span class="t" style="left:420.2px;top:960px;font-size:12px;font-weight:bold;color:#f4f4f4;transform:scaleX(0.8886)">100</span>
<!-- bottom tabs -->
<div class="a" style="left:0;top:994px;width:891px;height:22px;background:#1b2029"></div>
<div class="a" style="left:0;top:994px;width:36px;height:22px;background:#2b3340"></div>
<span class="t" style="left:4.9px;top:999px;font-size:12.2px;color:#f4f4f4;transform:scaleX(0.9235)">Cora</span>
<span class="t" style="left:42px;top:999px;font-size:12.2px;color:#f4f4f4;transform:scaleX(0.9650)">Properties</span>
<span class="t" style="left:108px;top:999px;font-size:12.2px;color:#f4f4f4;transform:scaleX(0.9831)">Project Browser - EM - Tipologia M1.rvt</span>
<svg style="left:0;top:173px" width="893" height="843" viewBox="0 173 893 843">
<path d="M879 177.300 l8.800 8.800 M887.800 177.300 l-8.800 8.800" stroke="#c4c7d0" stroke-width="1.500"/>
<g fill="none" stroke="#f2f2f2" stroke-width="1.400" stroke-linejoin="round" stroke-linecap="round">
<path d="M16.500 213 L19.800 204 L25 209.800 Q29 208.800 33 209.800 L38.300 204 L41.500 213 Q44.500 217.500 43.200 222.500 Q41 229.300 29 229.300 Q17 229.300 14.800 222.500 Q13.500 217.500 16.500 213 Z"/>
<path d="M14.300 215 q-1.500 2.500 0 6 M43.700 215 q1.500 2.500 0 6" stroke-width="1"/>
<circle cx="23.600" cy="217.100" r="5.200" stroke-width="1.200"/>
<path d="M34.300 219.200 l2.200 -4.600 l2.200 4.600" stroke-width="1.100"/>
<path d="M26 224.300 q4 2.600 8 0.300" stroke-width="1.200"/>
<path d="M29.600 222.500 v-1.800 q0 -1.200 1.500 -1.200" stroke-width="1"/>
</g><circle cx="23.600" cy="217.100" r="3" fill="#dcdcdc"/>
<circle cx="27.100" cy="325.700" r="4.700" fill="none" stroke="#f2f2f2" stroke-width="1.500"/><path d="M30.500 329.300 l5.500 4.800" stroke="#f2f2f2" stroke-width="3" stroke-linecap="round"/><path d="M31.500 330.300 l4 3.500" stroke="#8a8a8a" stroke-width="1" stroke-dasharray="0.800 0.800"/>
<path d="M85.500 225.3 h11.800 q1 0 1 1 v7 q0 1 -1 1 h-9.300 l-2.300 2.600 v-2.600 h-0.200 q-1 0 -1 -1 v-7 q0 -1 1 -1 z" fill="none" stroke="#f2f2f2" stroke-width="1.200" stroke-linejoin="round"/>
<path d="M87.400 230 h1.700 M90.500 230 h1.700 M93.600 230 h1.700" stroke="#f2f2f2" stroke-width="1.600"/>
<path d="M285 226.5 l2.300 -2.300 l10.500 10.300 l0.700 3 l-3 -0.700 z" fill="#1e1e1e" stroke="#f2f2f2" stroke-width="1.100" stroke-linejoin="round"/><path d="M286.500 226.2 l9.800 9.700 M296.300 236 l1.500 1.500" stroke="#f2f2f2" stroke-width="0.800"/>
<path d="M305.800 226.2 h11.500 l-1.300 10.800 q-0.200 1.400 -1.600 1.400 h-5.700 q-1.400 0 -1.600 -1.400 z" fill="#c9c9c9"/><ellipse cx="311.550" cy="226.2" rx="5.900" ry="1.700" fill="#8d8d8d" stroke="#ededed" stroke-width="1"/><path d="M308.500 228.5 v8 M310.500 228.5 v8.500 M312.600 228.5 v8.500 M314.600 228.5 v8" stroke="#9a9a9a" stroke-width="0.700"/>
<path d="M85.500 284.3 h11.800 q1 0 1 1 v7 q0 1 -1 1 h-9.300 l-2.300 2.600 v-2.600 h-0.200 q-1 0 -1 -1 v-7 q0 -1 1 -1 z" fill="none" stroke="#f2f2f2" stroke-width="1.200" stroke-linejoin="round"/>
<path d="M87.400 289 h1.700 M90.500 289 h1.700 M93.600 289 h1.700" stroke="#f2f2f2" stroke-width="1.600"/>
<path d="M285 285.5 l2.300 -2.300 l10.500 10.300 l0.700 3 l-3 -0.700 z" fill="#1e1e1e" stroke="#f2f2f2" stroke-width="1.100" stroke-linejoin="round"/><path d="M286.500 285.2 l9.800 9.700 M296.300 295 l1.500 1.500" stroke="#f2f2f2" stroke-width="0.800"/>
<path d="M305.800 285.2 h11.500 l-1.300 10.800 q-0.200 1.400 -1.600 1.400 h-5.700 q-1.400 0 -1.600 -1.400 z" fill="#c9c9c9"/><ellipse cx="311.550" cy="285.2" rx="5.900" ry="1.700" fill="#8d8d8d" stroke="#ededed" stroke-width="1"/><path d="M308.500 287.5 v8 M310.500 287.5 v8.500 M312.600 287.5 v8.500 M314.600 287.5 v8" stroke="#9a9a9a" stroke-width="0.700"/>
<path d="M85.500 343.3 h11.800 q1 0 1 1 v7 q0 1 -1 1 h-9.300 l-2.300 2.600 v-2.600 h-0.200 q-1 0 -1 -1 v-7 q0 -1 1 -1 z" fill="none" stroke="#f2f2f2" stroke-width="1.200" stroke-linejoin="round"/>
<path d="M87.400 348 h1.700 M90.500 348 h1.700 M93.600 348 h1.700" stroke="#f2f2f2" stroke-width="1.600"/>
<path d="M285 344.5 l2.300 -2.300 l10.500 10.300 l0.700 3 l-3 -0.700 z" fill="#1e1e1e" stroke="#f2f2f2" stroke-width="1.100" stroke-linejoin="round"/><path d="M286.500 344.2 l9.800 9.700 M296.300 354 l1.500 1.500" stroke="#f2f2f2" stroke-width="0.800"/>
<path d="M305.800 344.2 h11.500 l-1.300 10.800 q-0.200 1.400 -1.600 1.400 h-5.700 q-1.400 0 -1.600 -1.400 z" fill="#c9c9c9"/><ellipse cx="311.550" cy="344.2" rx="5.900" ry="1.700" fill="#8d8d8d" stroke="#ededed" stroke-width="1"/><path d="M308.500 346.5 v8 M310.500 346.5 v8.500 M312.600 346.5 v8.500 M314.600 346.5 v8" stroke="#9a9a9a" stroke-width="0.700"/>
<path d="M85.500 402.3 h11.800 q1 0 1 1 v7 q0 1 -1 1 h-9.300 l-2.300 2.600 v-2.600 h-0.200 q-1 0 -1 -1 v-7 q0 -1 1 -1 z" fill="none" stroke="#f2f2f2" stroke-width="1.200" stroke-linejoin="round"/>
<path d="M87.400 407 h1.700 M90.500 407 h1.700 M93.600 407 h1.700" stroke="#f2f2f2" stroke-width="1.600"/>
<path d="M285 403.5 l2.300 -2.300 l10.500 10.300 l0.700 3 l-3 -0.700 z" fill="#1e1e1e" stroke="#f2f2f2" stroke-width="1.100" stroke-linejoin="round"/><path d="M286.500 403.2 l9.800 9.700 M296.300 413 l1.500 1.500" stroke="#f2f2f2" stroke-width="0.800"/>
<path d="M305.800 403.2 h11.500 l-1.300 10.800 q-0.200 1.400 -1.600 1.400 h-5.700 q-1.400 0 -1.600 -1.400 z" fill="#c9c9c9"/><ellipse cx="311.550" cy="403.2" rx="5.900" ry="1.700" fill="#8d8d8d" stroke="#ededed" stroke-width="1"/><path d="M308.500 405.5 v8 M310.500 405.5 v8.500 M312.600 405.5 v8.500 M314.600 405.5 v8" stroke="#9a9a9a" stroke-width="0.700"/>
<path d="M85.500 461.3 h11.800 q1 0 1 1 v7 q0 1 -1 1 h-9.300 l-2.300 2.600 v-2.600 h-0.200 q-1 0 -1 -1 v-7 q0 -1 1 -1 z" fill="none" stroke="#f2f2f2" stroke-width="1.200" stroke-linejoin="round"/>
<path d="M87.400 466 h1.700 M90.500 466 h1.700 M93.600 466 h1.700" stroke="#f2f2f2" stroke-width="1.600"/>
<path d="M285 462.5 l2.300 -2.300 l10.500 10.300 l0.700 3 l-3 -0.700 z" fill="#1e1e1e" stroke="#f2f2f2" stroke-width="1.100" stroke-linejoin="round"/><path d="M286.500 462.2 l9.800 9.700 M296.300 472 l1.500 1.500" stroke="#f2f2f2" stroke-width="0.800"/>
<path d="M305.800 462.2 h11.500 l-1.300 10.800 q-0.200 1.400 -1.600 1.400 h-5.700 q-1.400 0 -1.600 -1.400 z" fill="#c9c9c9"/><ellipse cx="311.550" cy="462.2" rx="5.900" ry="1.700" fill="#8d8d8d" stroke="#ededed" stroke-width="1"/><path d="M308.500 464.5 v8 M310.500 464.5 v8.500 M312.600 464.5 v8.500 M314.600 464.5 v8" stroke="#9a9a9a" stroke-width="0.700"/>
</svg>

<!-- 3D view -->
<div class="a" style="left:893px;top:173px;width:1026px;height:20px;background:#454e5f"></div>
<div class="a" style="left:893px;top:193px;width:1026px;height:2px;background:#1c212c"></div>
<div class="a" style="left:893px;top:193px;width:2px;height:821px;background:#1c212c"></div>
<div class="a" style="left:893px;top:173px;width:128px;height:20px;background:#f4a62a;border:1px solid #fdfdfd;border-bottom:none"></div>
<span class="t" style="left:921.5px;top:177.5px;font-size:12.2px;font-weight:bold;color:#111;transform:scaleX(0.9826)">3D View 1</span>
<div class="a" id="canvas" style="left:895px;top:195px;width:1008px;height:802px;background:#fff"></div>
<div class="a" style="left:1903px;top:195px;width:16px;height:802px;background:#313845"></div>
<div class="a" style="left:1903px;top:211px;width:16px;height:1px;background:#3f4958"></div>
<div class="a" style="left:1903px;top:980px;width:16px;height:1px;background:#3f4958"></div>
<div class="a" style="left:1909px;top:588.5px;width:5px;height:16.5px;background:#4f5b6b;border-radius:2.5px"></div>
<div class="a" style="left:895px;top:997px;width:1024px;height:17px;background:#3b4453"></div>
<div class="a" style="left:1337px;top:997px;width:582px;height:17px;background:#313845"></div>
<div class="a" style="left:1610.5px;top:1002.5px;width:18px;height:5px;background:#4f5b6b;border-radius:2.5px"></div>
<div class="a" style="left:893px;top:1014px;width:1026px;height:2px;background:#2b3340"></div>
<span class="t" style="left:905px;top:1000px;font-size:12.2px;color:#f4f4f4;transform:scaleX(0.8793)">Perspective</span>
<svg style="left:895px;top:195px;overflow:hidden" width="1008" height="802" viewBox="0 0 1008 802" shape-rendering="crispEdges">
<defs>
<pattern id="h1" width="15.5" height="14.7" patternUnits="userSpaceOnUse" patternTransform="translate(799.4 308.8)"><path d="M0 0 L15.5 14.7 M0 14.7 L15.5 0" stroke="#000" stroke-width="0.9" fill="none"/></pattern>
<pattern id="h2" width="11.56" height="11.3" patternUnits="userSpaceOnUse" patternTransform="translate(500.8 436.9)"><path d="M0 0 L11.56 11.3 M0 11.3 L11.56 0" stroke="#111" stroke-width="0.8" fill="none"/></pattern>
<pattern id="h3" width="11.56" height="11.3" patternUnits="userSpaceOnUse" patternTransform="translate(583.2 472.8)"><path d="M0 0 L11.56 11.3 M0 11.3 L11.56 0" stroke="#111" stroke-width="0.8" fill="none"/></pattern>
<radialGradient id="sh"><stop offset="0" stop-color="#b9b9b9"/><stop offset="0.6" stop-color="#d9d9d9"/><stop offset="1" stop-color="#ffffff" stop-opacity="0"/></radialGradient>
<linearGradient id="cf" x1="0" y1="0" x2="0" y2="1"><stop offset="0" stop-color="#efefef"/><stop offset="1" stop-color="#dedede"/></linearGradient>
</defs>
<clipPath id="c1"><polygon points="778.5,304.5 888.6,304.5 888.6,422 778.5,422"/></clipPath>
<path clip-path="url(#c1)" d="M778.5 171.3 L888.6 276.1 M778.5 186.0 L888.6 290.7 M778.5 200.6 L888.6 305.4 M778.5 215.3 L888.6 320.0 M778.5 229.9 L888.6 334.7 M778.5 244.6 L888.6 349.3 M778.5 259.2 L888.6 364.0 M778.5 273.9 L888.6 378.6 M778.5 288.5 L888.6 393.3 M778.5 303.2 L888.6 407.9 M778.5 317.8 L888.6 422.6 M778.5 332.5 L888.6 437.2 M778.5 347.1 L888.6 451.9 M778.5 361.8 L888.6 466.5 M778.5 376.4 L888.6 481.2 M778.5 391.1 L888.6 495.8 M778.5 405.7 L888.6 510.5 M778.5 420.4 L888.6 525.1 M778.5 435.0 L888.6 539.8 M778.5 449.7 L888.6 554.4 M778.5 285.5 L888.6 180.8 M778.5 300.2 L888.6 195.4 M778.5 314.8 L888.6 210.1 M778.5 329.5 L888.6 224.7 M778.5 344.1 L888.6 239.4 M778.5 358.8 L888.6 254.0 M778.5 373.4 L888.6 268.7 M778.5 388.1 L888.6 283.3 M778.5 402.7 L888.6 298.0 M778.5 417.4 L888.6 312.6 M778.5 432.0 L888.6 327.3 M778.5 446.7 L888.6 341.9 M778.5 461.3 L888.6 356.6 M778.5 476.0 L888.6 371.2 M778.5 490.6 L888.6 385.9 M778.5 505.3 L888.6 400.5 M778.5 519.9 L888.6 415.2 M778.5 534.6 L888.6 429.8 M778.5 549.2 L888.6 444.5" fill="none" stroke="#1c1c1c" stroke-width="1" shape-rendering="auto"/>
<clipPath id="c2"><polygon points="468.7,425.6 543.6,425.6 543.6,498.7 533.4,498.7 533.4,470 531.4,467 527.4,465.5 474.9,464.1 468.7,448"/></clipPath>
<path clip-path="url(#c2)" d="M468.7 330.5 L543.6 404.8 M468.7 342.5 L543.6 416.8 M468.7 354.5 L543.6 428.8 M468.7 366.5 L543.6 440.8 M468.7 378.5 L543.6 452.8 M468.7 390.5 L543.6 464.8 M468.7 402.5 L543.6 476.8 M468.7 414.5 L543.6 488.8 M468.7 426.5 L543.6 500.8 M468.7 438.5 L543.6 512.8 M468.7 450.5 L543.6 524.8 M468.7 462.5 L543.6 536.8 M468.7 474.5 L543.6 548.8 M468.7 486.5 L543.6 560.8 M468.7 498.5 L543.6 572.8 M468.7 510.5 L543.6 584.8 M468.7 522.5 L543.6 596.8 M468.7 409.5 L543.6 335.2 M468.7 421.5 L543.6 347.2 M468.7 433.5 L543.6 359.2 M468.7 445.5 L543.6 371.2 M468.7 457.5 L543.6 383.2 M468.7 469.5 L543.6 395.2 M468.7 481.5 L543.6 407.2 M468.7 493.5 L543.6 419.2 M468.7 505.5 L543.6 431.2 M468.7 517.5 L543.6 443.2 M468.7 529.5 L543.6 455.2 M468.7 541.5 L543.6 467.2 M468.7 553.5 L543.6 479.2 M468.7 565.5 L543.6 491.2 M468.7 577.5 L543.6 503.2 M468.7 589.5 L543.6 515.2" fill="none" stroke="#1c1c1c" stroke-width="0.85" shape-rendering="auto"/>
<clipPath id="c3"><polygon points="557.7,425.6 624.4,425.6 624.4,500 557.7,500"/></clipPath>
<path clip-path="url(#c3)" d="M557.7 339.9 L624.4 406.1 M557.7 351.9 L624.4 418.1 M557.7 363.9 L624.4 430.1 M557.7 375.9 L624.4 442.1 M557.7 387.9 L624.4 454.1 M557.7 399.9 L624.4 466.1 M557.7 411.9 L624.4 478.1 M557.7 423.9 L624.4 490.1 M557.7 435.9 L624.4 502.1 M557.7 447.9 L624.4 514.1 M557.7 459.9 L624.4 526.1 M557.7 471.9 L624.4 538.1 M557.7 483.9 L624.4 550.1 M557.7 495.9 L624.4 562.1 M557.7 507.9 L624.4 574.1 M557.7 519.9 L624.4 586.1 M557.7 402.9 L624.4 336.7 M557.7 414.9 L624.4 348.7 M557.7 426.9 L624.4 360.7 M557.7 438.9 L624.4 372.7 M557.7 450.9 L624.4 384.7 M557.7 462.9 L624.4 396.7 M557.7 474.9 L624.4 408.7 M557.7 486.9 L624.4 420.7 M557.7 498.9 L624.4 432.7 M557.7 510.9 L624.4 444.7 M557.7 522.9 L624.4 456.7 M557.7 534.9 L624.4 468.7 M557.7 546.9 L624.4 480.7 M557.7 558.9 L624.4 492.7 M557.7 570.9 L624.4 504.7 M557.7 582.9 L624.4 516.7" fill="none" stroke="#1c1c1c" stroke-width="0.85" shape-rendering="auto"/>
<clipPath id="c4"><polygon points="628,425.6 651.3,425.6 651.3,500 628,500"/></clipPath>
<path clip-path="url(#c4)" d="M628.0 385.6 L651.3 408.7 M628.0 397.6 L651.3 420.7 M628.0 409.6 L651.3 432.7 M628.0 421.6 L651.3 444.7 M628.0 433.6 L651.3 456.7 M628.0 445.6 L651.3 468.7 M628.0 457.6 L651.3 480.7 M628.0 469.6 L651.3 492.7 M628.0 481.6 L651.3 504.7 M628.0 493.6 L651.3 516.7 M628.0 505.6 L651.3 528.7 M628.0 517.6 L651.3 540.7 M628.0 405.2 L651.3 382.1 M628.0 417.2 L651.3 394.1 M628.0 429.2 L651.3 406.1 M628.0 441.2 L651.3 418.1 M628.0 453.2 L651.3 430.1 M628.0 465.2 L651.3 442.1 M628.0 477.2 L651.3 454.1 M628.0 489.2 L651.3 466.1 M628.0 501.2 L651.3 478.1 M628.0 513.2 L651.3 490.1 M628.0 525.2 L651.3 502.1 M628.0 537.2 L651.3 514.1" fill="none" stroke="#1c1c1c" stroke-width="0.85" shape-rendering="auto"/>
<clipPath id="c5"><polygon points="534,468 540,468 540,498.5 534,498.5"/></clipPath>
<path clip-path="url(#c5)" d="M534.0 443.3 L540.0 449.2 M534.0 455.3 L540.0 461.2 M534.0 467.3 L540.0 473.2 M534.0 479.3 L540.0 485.2 M534.0 491.3 L540.0 497.2 M534.0 503.3 L540.0 509.2 M534.0 515.3 L540.0 521.2 M534.0 452.7 L540.0 446.8 M534.0 464.7 L540.0 458.8 M534.0 476.7 L540.0 470.8 M534.0 488.7 L540.0 482.8 M534.0 500.7 L540.0 494.8 M534.0 512.7 L540.0 506.8 M534.0 524.7 L540.0 518.8" fill="none" stroke="#1c1c1c" stroke-width="0.85" shape-rendering="auto"/>
<path d="M0 62 L21 72 L21.8 270 L24 530 L25.7 802 M1.5 561 L1.5 802 M21 121 L61 137.7 L62.2 260 L63.8 530 L64.5 674 M61.5 188.2 L279 178 M279 178 L279.3 260 L281.2 530 L281 546 M279 178 L340 213.2 M347.8 213.2 L378.4 231.3 M383 231.3 L440.8 266.4 M340 213.2 L347.8 213.2 M340 213.2 L340.4 405 L340.4 513 M347.8 213.2 L348 405 L348 516 M340.4 562 L340.4 592 M348 557 L348 590 M378.4 231.3 L382.8 231.3 M378.4 231.3 L378.4 570 M382.6 231.3 L382.3 570 M62.7 246.7 L77.6 246.7 L77.6 260 L79.2 530 L79.8 617.8 M63 254 L71.2 253.8 L71.2 260 L72.3 530 L72.8 614.3 L64.5 614.3 M72.8 617.8 L79.8 617.8 M63.5 427.5 L67 429 L69.5 433 L70 436 L69.5 439.5 L67 442.5 L64 444 M65 428 L67.5 436 L65 443.5 M79.8 617.8 L168 623.2 L231.6 626.4 M239 626.8 L281 629 M24.6 693.3 L168 623.2 M281.2 597 L281 629 M281 629 L292 622.5 M302 616.5 L319.4 605.5 M326 601.5 L340.4 592 M340.4 592 L348 590 L360.5 582 M365.5 578.5 L378.4 570 L382.3 570 L402 557.5 M24.6 721.4 L56.2 729.5 L79 741.5 L93.7 756.2 L100.4 772.3 L99.6 787 L95 802 M441 266.5 L669.7 259.7 L713.3 259 M441 266.5 L441.4 441.4 M448.3 273.6 L662.8 267.2 M448.3 273.6 L448.9 438 M662.8 267.2 L662.5 525.2 M669.7 259.7 L669.3 531.2 M456.3 281.8 L547.4 278.9 M459.5 284.5 L547.4 281.7 M456.3 281.8 L455.8 437.5 M459.5 284.5 L459 421 M547.4 270.6 L547.4 500.5 M554.6 270.4 L554.2 501 M556.5 279 L556.2 501 M558 279 L557.7 501 M554.6 278.9 L654.8 275.7 M558 281.7 L651.6 278.7 M651.6 278.7 L651.4 516 M654.8 275.7 L653.7 516.3 M451 389.5 L454 389.5 L455 395 L455.5 409 L454 411 L452.5 409 L452.5 401 L450 399 L450 391 L451 389.5 M459.6 420.5 L547.3 420.5 M460 425.5 L547.3 425.5 M557.7 420.5 L651.3 420.5 M557.7 425.5 L651.3 425.5 M465.2 421.3 L465.2 439 M467 425.6 L467 443 M468.7 425.6 L468.7 448 M543.6 425.6 L543.6 499 M545.3 425.6 L545.3 499 M624.4 425.6 L624.4 500 M626.4 425.6 L626.4 500 M628 425.6 L628 500 M533.5 498.7 L547.3 498.7 M557.7 500 L651.3 500 M557.7 501.3 L651.3 501.3 M628.4 506.6 L651.4 506.6 M628.4 512.6 L651.6 514 M628.4 515 L653.6 516.3 M629 525.2 L662.6 525.2 M629 527.2 L658.3 529.2 L658.3 538 M658.3 531.2 L669.6 531.2 M660 537.3 L712.8 538.4 M713.3 259 L713.2 538.4 M713.3 259 L738.3 210.6 L983.7 200.7 M738.3 210.6 L738.8 405 L737.8 593 M939.8 203.4 L938.5 449.3 M983.7 200.7 L981.5 450 L981.5 443.4 M712.8 538.4 L737.8 593 L762 594 M751.6 594 L758.5 605 L767 621 M762.2 260.5 L911.4 256.3 M762.2 260.5 L761.7 450 L762.2 594 M911.4 256.3 L910.4 449.3 M770.2 268.5 L902.6 265 M770.2 268.5 L770.7 505 L769.7 594 M902.6 265 L902 451 M900 265.2 L899.6 451 M888.6 303 L888.6 422 M778 360.2 L888.6 360.2 M778 384.3 L888.6 384.3 M866 431.6 L881 431.2 M866 434.5 L882 434.5 M866 431.6 L866 434.5 M890.7 449.9 L978.3 450.3 M978.3 443.4 L1010 447.3 M978.3 443.4 L978.3 450.7 M978.3 450.7 L1010 456.6 M891.7 452.2 L1010 462 M891.7 454.2 L946.8 464 L1010 468 M891.7 457 L906.5 461 L956.7 473.9 L996 474.9 L996 480.8 L1010 481.8 M890.7 457 L890.7 583 L898.6 590 L898.6 598.9 L905.5 603.8 M906.5 461 L906.5 505 L905.5 637.8 M905 461 L904.5 604 M906.5 490.6 L956.7 507.3 L961.6 510.3 L1002.9 510.3 M956.7 473.9 L956.7 507.3 M957.6 510 L956.7 687 M909 498.5 L953.7 516.2 L952.7 659.5 L908.4 620.7 L909 498.5 M905.5 637.8 L956.7 687 L1002.9 689 L1007.8 691.5 M1002.9 481.8 L1002.9 605 L1001 655 L1007.8 659 M1004 481.8 L1004 605 L1002.5 654 M1007.8 481.8 L1007.8 691.5 M1004 562 L1010 564 M1004 566.5 L1010 570.5 M861.2 595.5 L898.6 597 M983.2 427.6 L984.2 418.8 L988 413.5 L992 410 L998 408.3 L1004 408 L1010 408 M988 427.6 L989 421.7 L992 417.5 L995 414.8 L1004 412.9 L1010 412.9 M983.2 427.6 L988 428.6 M812 552.6 L855.3 554.6 L855.3 579.2 L846 578.5 M812 552.6 L812 558.5 M394.7 454.2 L462 437.5 L468.5 450 L477.4 476.8 L477.4 483 M394.7 454.2 L393.2 462.5 L399 486.7 M399 486.7 L443.4 488.6 L464 490 L477.4 483.3 M431.5 451.2 L443.4 488.6 M450.2 445.3 L464 485.7 M405 453.5 L406 458 L410 457 M387.3 465 L393.2 463.6 M387.3 465 L387.8 485.7 M392.2 465 L398 483.7 M387.3 486.7 L399 486.7 M389 488.4 L443.4 490.3 L480.7 491 L491.5 492 L494.2 496.7 L494.2 523.3 M480.9 491.4 L492.2 498.7 L492.2 523.3 M389 488.4 L387.8 496.5 L398 548.7 L409 560.5 L420.7 560.5 M409 560.5 L409 568.4 M415.8 564.4 L420.7 560.5 M527.4 465.5 L531.4 469 L531.4 482 M533.4 470 L533.4 497 M477.4 482.7 L528 480.8 M480.9 490 L518 489 M521 489.5 L524 492 L526 490 L523.5 488.5 M494.8 499 L508.8 499.6 M509 499 L512.5 502 L514.5 499.5 L512 498 M495.5 508.5 L499.5 512.5 L495 513.3 M503.5 523.9 L515.4 512 M516.8 499.6 L547.3 500.7 L628.4 501.7 L628.4 527.2 M516.8 499.6 L516.8 523.9 M515.4 512 L515.4 523.9 M469.6 523.5 L515.4 523.9 L564.6 525.9 L628.4 527.2 M521.5 522 L523.5 524 M620.5 522.5 L622 526.5 M363.6 603.3 L470 523.6 M363.6 603.3 L540 612.5 L666 618.7 M364.6 609.5 L540 617 L647 624 L666 624 M415.8 616.8 L540 621.7 L613.8 626.6 M363.6 603.3 L364.6 609.9 L369.5 621.7 L376.4 623.3 L387.3 620.7 L415.8 616.8 M382.3 610.9 L382.3 620.7 M415.8 611.8 L415.8 617.7 M369.5 621.7 L368.2 724 L367.6 802 M387.3 621.7 L385.3 712.2 L383.3 802 M469 619.7 L470 716 L472 718 L477 718 L479 716 L480.7 620.3 M506.3 621.7 L500.4 715.2 L502.5 717 L505 715.2 L509.9 621.7 M519.7 621.7 L518.5 675.8 L520.2 677.3 L522 675.8 L524 621.7 M666 618.7 L666 624 L658 637.4 L647.3 636.4 L618.7 627.6 M647.3 624 L647.3 636.4 M644.3 635.5 L645.3 802 M619.7 627.6 L622.7 724 L625 725.5 L627.6 724 L624.6 629.5 M626.6 657 L628.6 682.7 L627.3 683.5 M213.4 575 L254.4 555.4 L294.5 540.7 L309.8 585.4 M213.4 575 L232.4 629.6 M216.3 574 L235.6 627 M232.4 629.6 L239 630.4 L239 625 L235.6 627 M239 625 L248 616 L257 610.3 L275 602 L299.9 591 L309.8 585.4 M232.4 630.4 L211.5 802 M239 630.4 L218.2 802 M297.7 591 L292.4 651.8 M303.9 589.4 L297.7 653.7 M297.7 591 L299 588.5 L303.9 589.4 M292.4 651.8 L281 663.9 L262.4 682.6 L242.3 693.9 L231.6 698 M231.6 698 L267.7 710 L294.5 711.5 L315.4 708.8 L339 708.3 L358.7 711.2 L367.6 715.2 M227.6 702 L227.6 706 L253 706.5 L273 717 L305 718.5 L330 714.5 L352.8 713 L359 715 M230 699.5 L255 708.5 L273 714.5 L305 715.5 L333 711.5 M292.8 651.2 L315.4 656 L331.2 659.7 L352.8 659.7 L368.6 659 M387.3 658 L406 659.7 L419.7 665 M419.7 665 L386.3 705.3 M421 667.5 L386.3 708 M404 663 L386.3 680.7 M367.6 704.3 L358.7 714.2 M353.8 722 L355 716 L358.7 714.2 M353.8 722 L358.7 802 M359.7 722 L361 718 L367 716 M359.7 722 L365.6 802 M286 719.6 L279.8 789.7 L281.8 791.3 L283.8 789.7 L291.3 719.6 M305.2 719.6 L299.3 767.3 L302 769 L304.7 767.3 L310.6 719.6 M309.5 534 L361.3 512.3 L372.9 547.7 M309.5 534 L323.3 576.5 M312.5 532.7 L325.3 575.2 M315.4 531.5 L327.2 574 M319.4 530 L330.8 571.9 M323.3 576.2 L328.8 576.2 L330.8 571.9 M330.8 571.9 L337 565.5 L345 560.5 L355 556 L366.6 551.6 L372.9 547.7 M323.3 576.2 L320.3 605 L314.4 656 M328.8 576.2 L325.7 605 L319.4 657 M364.6 552.6 L360.3 601.8 M369 551.6 L364.6 601.8 M364.6 552.6 L365.5 550 L369 551.6 M322.3 629.6 L339 624.6 L354.8 611.8 L363.6 602.5 M322.3 631.5 L339 636.4 L369.5 642.3 M320.3 634 L320.3 637.4 L339 639.4 L343 644.3 L369.5 647.7 M320.3 634 L322.3 631.5 M354.8 646.3 L353.8 659 M359.7 646.3 L358.7 659 M387.3 640.4 L402 638.4 L424.7 639.4 L437.4 643.7 M387.3 646.3 L402 644.3 L421.7 641.5 M437.4 643.7 L458.1 619.5 M439 645.5 L459.5 621.5 M425.6 638.4 L443.4 619.3 M415.8 616.8 L458.1 619.5 M421.7 642.3 L419.7 649 L430.6 780 L432.5 781 L434.5 779 L425.6 650 L427 644.3 M452.2 623.6 L462 722 L465.4 722 L456 622.7 M406 682.7 L417.8 802 M410 678.8 L421.7 802 M778.5 523.7 L811 545 M778.5 523.7 L764.2 562.5 M764.2 562.5 L789.4 581 M811 545 L805 547.5 L787 595 M808.5 548 L791 594 M812 546 L794.3 592 M811 545 L812 546 M774.5 550 L774.5 550.6 M766.3 565.4 L771.3 605 L776.6 621.7 M770.3 568.4 L775.2 605 L779 617 M666 616.8 L687.6 617.4 L729 624 L756.5 623.3 L776.6 621.5 M662.4 654.2 L677.8 652.8 L697.4 654.2 L736.8 661 L766.3 661 L793.9 658 M662.4 656 L677.8 655.5 L701.4 658.7 L736.8 664.6 L768.3 665.4 L795.9 664.6 M750 668.5 L796.5 667 M668.9 619.7 L672.8 653 M674.8 620.7 L678.7 653 M668.9 619.7 L674.8 620.7 M666 657 L665 677 M670 656 L669 676 M674 656 L673.5 675.5 M678.5 656 L678.5 675.5 M776.6 621.7 L783.5 637.4 L794.3 654.2 L797 667 M761.5 640.5 L763.5 645.5 M779 668 L781 684.7 M784 667 L785 684.7 M791.5 667 L797.5 683 M786 595 L786.4 602 L797.2 682.7 M791.3 594 L792.3 602 L802.2 682.7 M794.5 605 L798.2 611.8 L806 682.7 M799.5 611 L804 613.8 L813 686.6 M812 558.5 L852.3 583 L860.2 589 L862.5 593 L859.2 602 L837.6 660 M858 591 L856.3 602 L833.6 661 M854 588 L852.3 602 L830.7 655 M812 558.5 L794.3 607 L834.6 641.4 M830.7 655 L830.7 659 L833.6 662 L837.6 661 M830.7 659 L841.5 743.7 L852.3 802 M837.6 661 L848.4 743.7 L859.2 802 M662.4 677.2 L681.7 675.2 L707.3 677.8 L736.8 682.7 L762.4 686.2 L782 684.7 L809 682.7 M809 682.7 L818.9 704.3 L830.7 724 L840.5 737.8 M662.4 678.8 L664 735.8 M675.8 682.7 L680.7 722 M681.7 680.7 L687.6 728 M675.8 682.7 L678.5 680 L681.7 680.7 M665 735.8 L681.7 733.5 L707.3 735.8 L736.8 742 L766.3 746.7 L789.4 747.6 L840.5 742.7 M665 739.8 L689.6 737.8 L717 741.7 L746.7 749.6 L776.2 754.5 L807 755.5 M689.6 737.8 L717 739 L750 746.7 L789.4 750.6 L815 749.6 L841.5 748.6 M825.8 751.6 L828.7 748.6 L841.5 749.6 L842.5 757.5 L825.8 753.6 L825.8 751.6 M840.5 737.8 L841.5 757.5 M666 739.8 L664 802 M670.9 739.8 L669 802 M675.8 738.8 L674.8 802 M681.7 737.8 L677.8 802 M689.6 738.8 L684.7 802 M807 755.5 L813 802 M812 755.5 L817.9 802 M815 755.5 L819.9 802 M820.9 755.5 L825.8 802 M837.6 758.5 L844.5 771.3 L848.4 802 M852.3 779 L859.2 802" fill="none" stroke="#000" stroke-width="1"/>
<path d="M77.9 302.5 L78.3 363.7 M78.9 459 L79.2 518 M454.5 395 L454.5 409 M463 420 L490 420 M619 421 L651.3 421 M777.7 304.4 L892.5 302.6 M777.7 304 L777.7 422 M777 422 L893 422 M891.8 302.6 L891.8 422 M923 455.8 L945 457.8 M949 463 L967 463.7 M976 461 L1010 460 M968 470 L998 469.5 M474.9 464.1 L527.4 465.5 M471 718 L478 718 M658 528.6 L665 605 L666 618.7 M662 631.5 L663.6 802 M707 658 L745 664 M663 705 L663.5 718" fill="none" stroke="#000" stroke-width="2"/>
<path d="M545.3 426 V499" stroke="#8a8a8a" stroke-width="2"/>
<g shape-rendering="auto" fill="none" stroke="#000">
<circle cx="888.4" cy="432.6" r="7.3" stroke-width="1"/>
<circle cx="888.6" cy="433" r="4.2" stroke-width="1"/>
<circle cx="886.8" cy="451.6" r="3.2" stroke-width="2"/>
<ellipse cx="917.3" cy="479.4" rx="2.3" ry="6" stroke-width="1" transform="rotate(-8 917.3 479.4)"/>
<ellipse cx="923.2" cy="481.4" rx="2.3" ry="6" stroke-width="1" transform="rotate(-8 923.2 481.4)"/>
<ellipse cx="928.7" cy="482.7" rx="2.3" ry="6" stroke-width="1" transform="rotate(-8 928.7 482.7)"/>
<ellipse cx="934" cy="484.3" rx="2.3" ry="6" stroke-width="1" transform="rotate(-8 934 484.3)"/>
<ellipse cx="940" cy="485.7" rx="2.3" ry="6" stroke-width="1" transform="rotate(-8 940 485.7)"/>
<ellipse cx="945.8" cy="487.7" rx="2.3" ry="6" stroke-width="1" transform="rotate(-8 945.8 487.7)"/>
</g>
<path d="M815 557.5 L832 558.3 M835 558.4 L852.5 559.1 M819.5 560.7 L832 561.5 M835 561.6 L852.5 562.3 M824 563.9 L832 564.7 M835 564.8 L852.5 565.5 M828.5 567.1 L832 567.9 M835 568 L852.5 568.7 M833 570.5 L832 571.3 M839 571.4 L852.5 572.1 M837.5 574 L832 574.8 M843.5 574.9 L852.5 575.6" fill="none" stroke="#000" stroke-width="1.6"/>
<text x="0" y="0" transform="translate(614.5 403.3) scale(-1 1)" font-family="Liberation Sans, sans-serif" font-size="15.5" fill="#000" shape-rendering="auto">VF</text>
<g shape-rendering="auto">
<ellipse cx="918.5" cy="118.6" rx="69" ry="6.5" fill="none" stroke="#d9d9d9" stroke-width="1.2" stroke-dasharray="3 2.5"/>
<ellipse cx="917" cy="117.6" rx="42" ry="4.2" fill="url(#sh)"/>
<polygon points="938.3,64.7 943.8,67 943.8,112.4 938.3,115.9" fill="#f1f1f1" stroke="#b4b4b4" stroke-width="0.8"/>
<rect x="888.3" y="64.9" width="50" height="51" fill="url(#cf)" stroke="#a6a6a6" stroke-width="1"/>
<rect x="898" y="74" width="31" height="32" fill="#dbdcdf"/>
<text x="896.5" y="95.2" font-family="Liberation Sans, sans-serif" font-weight="bold" font-size="14" fill="#8d9096" textLength="35.5" lengthAdjust="spacingAndGlyphs">FRONT</text>
<text x="939.5" y="95" font-family="Liberation Sans, sans-serif" font-weight="bold" font-size="12" fill="#9a9da3" textLength="3.5" lengthAdjust="spacingAndGlyphs">S</text>
</g>
</svg>
<svg style="left:893px;top:173px" width="1026" height="843" viewBox="893 173 1026 843">
<path d="M899 183.500 l7 -7 l2.500 1.300 l5.500 5.500 l-1 1 l-0.700 -0.600 v4.800 l-2.500 1.300 h-8 v-6.300 l-1.500 1.300 z" fill="#f2f2f2"/><path d="M906 176.500 l2.500 1.300 l5.500 5.500 l-1 1 l-6.200 -5.500 z" fill="#9a9a9a"/><path d="M909.800 184.500 l2.500 -0.800 v4.800 l-2.500 1.300 z" fill="#c4c4c4"/><rect x="903.800" y="185.800" width="2.600" height="4" fill="#f0b73a"/>
<path d="M1006.700 178.700 l8.800 9.200 M1015.500 178.700 l-8.800 9.200" stroke="#a9a3b0" stroke-width="1.300"/>
<path d="M1908 180.700 h8" stroke="#a9adbf" stroke-width="1.300"/><path d="M1908 183.300 h8 l-4 3.800 z" fill="#a9adbf"/>
<path d="M1907.300 205 l4.400 -4 l4.400 4" fill="none" stroke="#b0b3c3" stroke-width="1.600"/>
<path d="M1907.300 986 l4.400 4 l4.400 -4" fill="none" stroke="#b0b3c3" stroke-width="1.600"/>
<path d="M1342.800 1001.500 l4 4 l-4 4" fill="none" stroke="#a9adbf" stroke-width="1.600" transform="rotate(180 1344.800 1005.500)"/>
<path d="M1893 1001.500 l4 4 l-4 4" fill="none" stroke="#b0b3c3" stroke-width="1.600"/>
<path d="M1915.500 1009 v2 M1911.500 1011 h1.500 M1915 1011 h1.500" stroke="#8d93a3" stroke-width="1.500"/>
<rect x="978.300" y="1000" width="15.700" height="11.500" fill="#9c9c9c"/>
<path d="M978.3 1000 h2.240 v2.300 h-2.240 z M978.3 1004.6 h2.240 v2.300 h-2.240 z M978.3 1009.2 h2.240 v2.300 h-2.240 z M980.543 1002.3 h2.240 v2.300 h-2.240 z M980.543 1006.9 h2.240 v2.300 h-2.240 z M982.786 1000 h2.240 v2.300 h-2.240 z M982.786 1004.6 h2.240 v2.300 h-2.240 z M982.786 1009.2 h2.240 v2.300 h-2.240 z M985.029 1002.3 h2.240 v2.300 h-2.240 z M985.029 1006.9 h2.240 v2.300 h-2.240 z M987.272 1000 h2.240 v2.300 h-2.240 z M987.272 1004.6 h2.240 v2.300 h-2.240 z M987.272 1009.2 h2.240 v2.300 h-2.240 z M989.515 1002.3 h2.240 v2.300 h-2.240 z M989.515 1006.9 h2.240 v2.300 h-2.240 z M991.758 1000 h2.240 v2.300 h-2.240 z M991.758 1004.6 h2.240 v2.300 h-2.240 z M991.758 1009.2 h2.240 v2.300 h-2.240 z" fill="#c6c6c6"/>
<path d="M1005.500 1003.500 h9.500 v9 h-9.500 z M1005.500 1003.500 l4 -4 h9.500 v9 l-4 4 M1015 1003.500 l4 -4" fill="none" stroke="#e8e8e8" stroke-width="1.100"/>
<circle cx="1036.200" cy="1004.400" r="3.400" fill="#f7c860"/><path d="M1036.200 998.200 v1.700 M1036.200 1009 v1.700 M1030 1004.400 h1.700 M1031.800 1000 l1.200 1.200 M1040.600 1000 l-1.200 1.200 M1031.800 1008.800 l1.200 -1.200" stroke="#f7c860" stroke-width="1"/>
<circle cx="1042.4" cy="1007.5" r="3.6" fill="#5fd0dc"/><path d="M1041 1011.4 h2.800 v1.600 l-1.400 1 l-1.400 -1 z" fill="#f2f2f2"/>
<defs><radialGradient id="bl" cx="0.4" cy="0.35" r="0.7"><stop offset="0" stop-color="#ffffff"/><stop offset="1" stop-color="#bdbdbd"/></radialGradient></defs>
<ellipse cx="1060.700" cy="1011.300" rx="5" ry="1.600" fill="#000"/><circle cx="1061.400" cy="1003.400" r="5.500" fill="url(#bl)"/>
<circle cx="1068.5" cy="1007.5" r="3.6" fill="#5fd0dc"/><path d="M1067.1 1011.4 h2.800 v1.600 l-1.400 1 l-1.400 -1 z" fill="#f2f2f2"/>
<path d="M1085.500 1001 h9 q1 5 -2 7.500 h-5 q-3 -2.500 -2 -7.500 z" fill="#b4b4b4"/><path d="M1085.500 1003.500 l-3.500 -3 M1094.500 1002.500 q3.500 -2.500 3 2" fill="none" stroke="#b4b4b4" stroke-width="1.400"/><path d="M1088 1000.500 q2 -2.500 4 0 z" fill="#b4b4b4"/>
<circle cx="1094.5" cy="1007.5" r="3.6" fill="#5fd0dc"/><path d="M1093.1 1011.4 h2.800 v1.600 l-1.400 1 l-1.400 -1 z" fill="#f2f2f2"/>
<path d="M1113.1 1013.300 v-10.300 h10.600" fill="none" stroke="#e8e8e8" stroke-width="1.700"/><path d="M1119 998.200 v2.200 M1108 1009.100 h2.600 M1119 1005.500 v1.800 M1117.4 1009.100 h1.800" stroke="#49aef5" stroke-width="1.400"/>
<path d="M1117.600 1007.700 l6 6 M1123.600 1007.700 l-6 6" stroke="#f25a5a" stroke-width="1.700"/>
<path d="M1139.1 1013.300 v-10.300 h10.600" fill="none" stroke="#e8e8e8" stroke-width="1.700"/><path d="M1145 998.200 v2.200 M1134 1009.100 h2.600 M1145 1005.500 v1.800 M1143.4 1009.100 h1.800" stroke="#49aef5" stroke-width="1.400"/>
<circle cx="1146.6" cy="1007.5" r="3.6" fill="#5fd0dc"/><path d="M1145.2 1011.4 h2.800 v1.600 l-1.400 1 l-1.400 -1 z" fill="#f2f2f2"/>
<path d="M1161 1006 l7.300 -7.500 l7.300 7 l-1 1 l-1 -0.800 v7.500 h-10 v-7.200 l-1.600 1.300 z" fill="#f2f2f2"/><path d="M1168.300 998.500 l7.300 7 l-1 1 l-7.300 -6.800 z" fill="#9a9a9a"/><rect x="1167.200" y="1008.300" width="7.300" height="5.500" fill="#5fd0dc"/><path d="M1170 1008.300 v-1.800 a2 2 0 0 1 4 0" fill="none" stroke="#5fd0dc" stroke-width="1.200"/><rect x="1170.200" y="1010" width="1.400" height="2" fill="#2b3a4a"/>
<circle cx="1189.600" cy="1007.400" r="2.200" fill="none" stroke="#b8b8b8" stroke-width="1.300"/><circle cx="1196.400" cy="1007.400" r="2.200" fill="none" stroke="#b8b8b8" stroke-width="1.300"/><path d="M1191.800 1007 h2.400 M1188 1005.500 l2.500 -3 M1197.500 1005.500 l2 -3" fill="none" stroke="#b8b8b8" stroke-width="1.100"/>
<circle cx="1220" cy="1004.100" r="4.200" fill="#5fd0dc"/><path d="M1218.200 1008.600 h3.700 v2 l-1.850 1.200 l-1.850 -1.200 z" fill="#f2f2f2"/>
<path d="M1240.100 999.700 h8 l3 3 v6 h-11 z" fill="#b4b4b4"/><rect x="1241.800" y="1001.300" width="5.500" height="5.500" fill="#d8d8d8"/><path d="M1246 1008.500 v-1.500 h1.500 M1250.500 1007 h1.500 v1.500 M1246 1010.700 v1.500 h1.500 M1250.500 1012.200 h1.500 v-1.500" fill="none" stroke="#f2f2f2" stroke-width="1.100"/>
<path d="M1264.500 1012 v-8 q0 -5 5 -5 h8 M1268 1012 v-12.500 M1271.500 1012 v-13 M1275 1004 v-5 M1264.500 1002 h12 M1265 1005.500 h8" fill="none" stroke="#e0e0e0" stroke-width="0.900"/><path d="M1264.500 1009 h9 M1267.500 1006.500 v5.500 M1270.500 1006.500 v5.500 M1267.500 1006.500 h3" fill="none" stroke="#f25a5a" stroke-width="1"/>
<circle cx="1276.4" cy="1007.5" r="3.6" fill="#5fd0dc"/><path d="M1275 1011.4 h2.800 v1.600 l-1.400 1 l-1.400 -1 z" fill="#f2f2f2"/>
<path d="M1291.700 1003.500 l3 -2.700 h9.500 v7.500 l-3 2.900 h-9.500 z" fill="#7cc4f8"/><rect x="1294.300" y="1004.700" width="6.300" height="5.800" fill="#e8e8e8"/>
<path d="M1317 998.500 v11 M1328.500 998.500 v6 M1317 1001 h11.500 M1317 1007.500 h6" fill="none" stroke="#8a93a3" stroke-width="1.200"/><path d="M1317 1007.500 h6" stroke="#8a93a3" stroke-width="1.200" stroke-dasharray="1.500 1"/><path d="M1325 1005.500 h6.500 v4.500 h-6.500 z M1326.300 1005.500 v-2 h3.900 v2" fill="#8a93a3"/><rect x="1327.300" y="1011.300" width="2" height="2" fill="#8a93a3"/>
</svg>

</div>
</body>
</html>
